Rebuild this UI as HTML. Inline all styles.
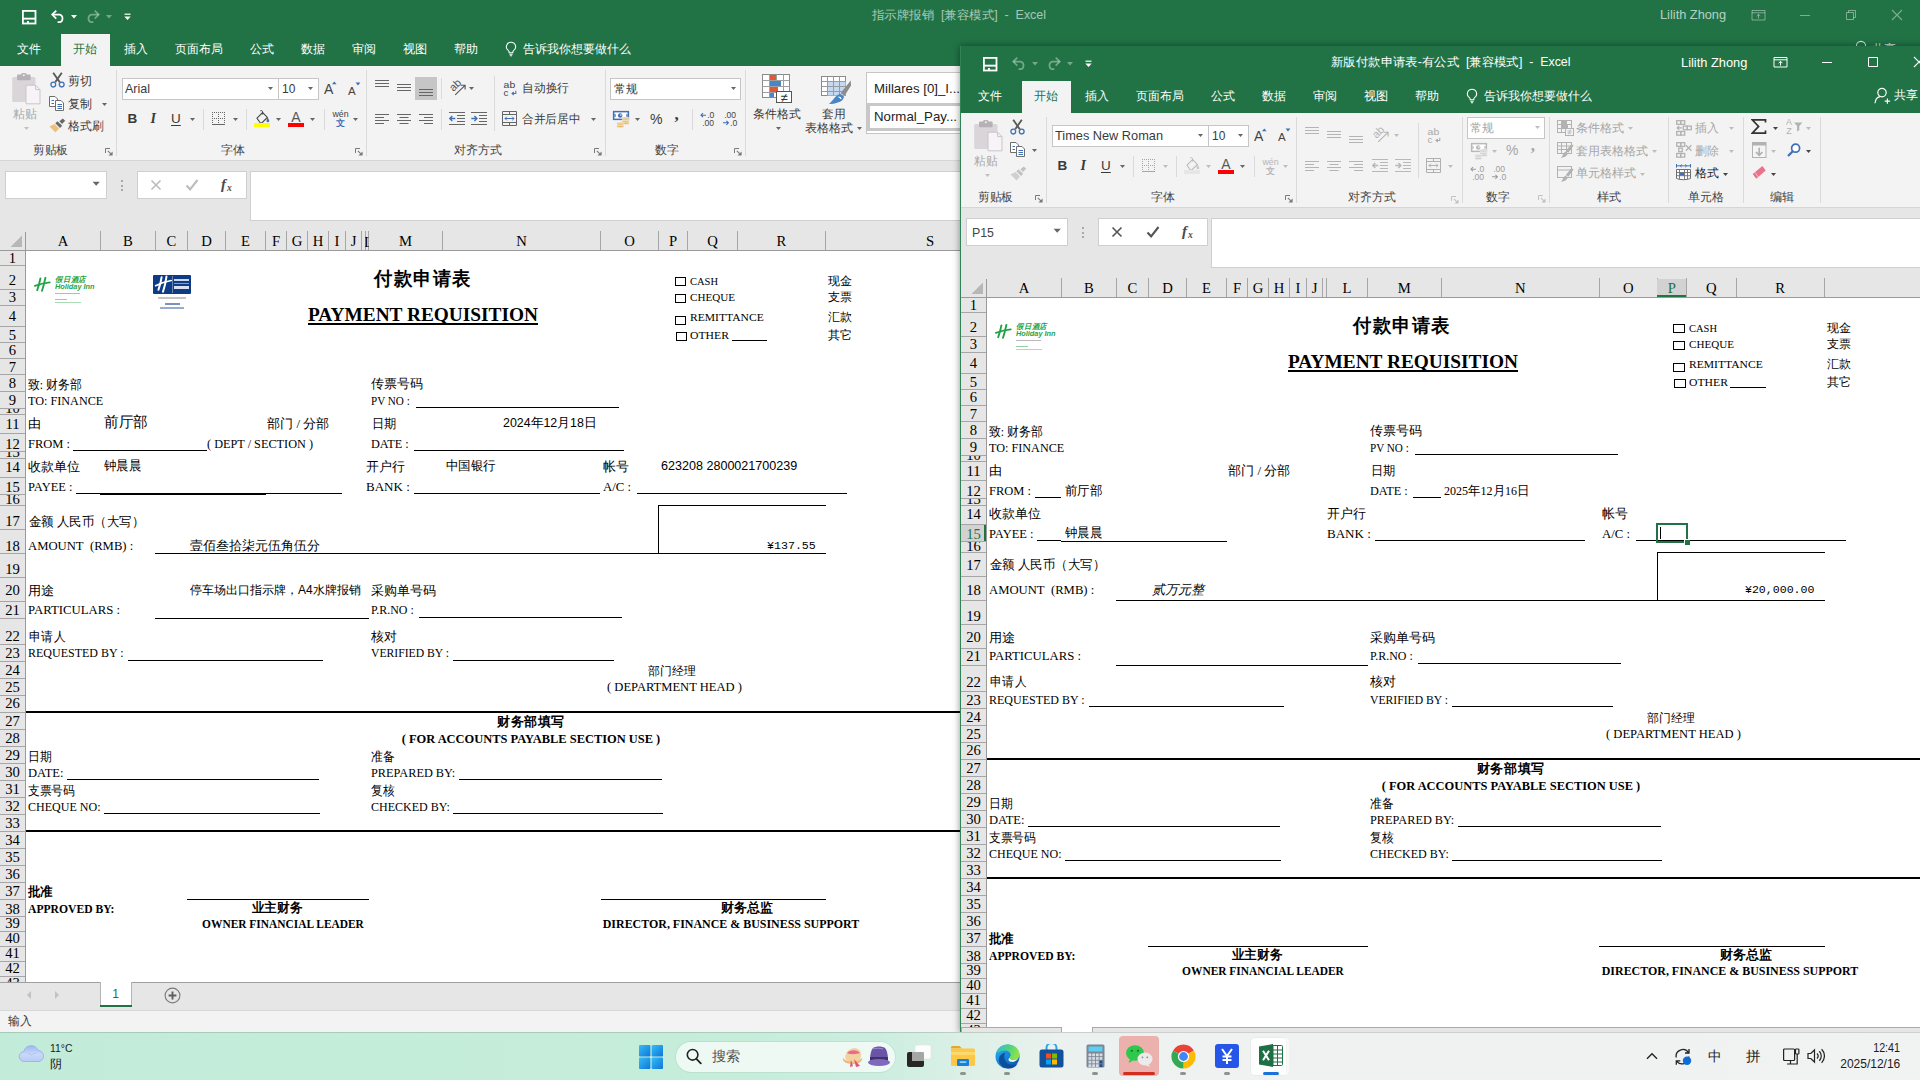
<!DOCTYPE html>
<html><head><meta charset="utf-8"><title>Excel</title><style>html,body{margin:0;padding:0}body{width:1920px;height:1080px;overflow:hidden;position:relative;background:#fff;font-family:"Liberation Sans",sans-serif}
#root{position:absolute;left:0;top:0;width:1920px;height:1080px;overflow:hidden}
#root div,#root span.t,#root svg{position:absolute}
#root .clip{overflow:hidden}
span.t{white-space:nowrap;display:block}
b.m{font-weight:inherit}
.fs{font-family:"Liberation Sans",sans-serif}.fr{font-family:"Liberation Serif",serif}.fm{font-family:"Liberation Mono",monospace}
</style></head><body><div id="root">
<div style="left:0px;top:0px;width:1920px;height:66px;background:#217346;"></div>
<svg style="left:22px;top:10px;" width="15" height="15" viewBox="0 0 15 15"><rect x="0.9" y="0.9" width="12.6" height="12.6" fill="none" stroke="#fff" stroke-width="1.8"/><rect x="1" y="7.7" width="12.4" height="1.9" fill="#fff"/><rect x="5" y="11" width="1.9" height="2" fill="#fff"/></svg>
<svg style="left:50px;top:9px;" width="16" height="14" viewBox="0 0 16 14"><g fill="none" stroke="#fff" stroke-width="1.7"><path d="M6.3 1.6L2.2 5.6l4.1 4"/><path d="M2.6 5.6h7.2a4 4 0 0 1 0 7.6H7.6"/></g></svg>
<svg style="left:71px;top:15px;" width="6" height="4" viewBox="0 0 6 4"><path d="M0 0h6L3 3.4z" fill="#fff"/></svg>
<svg style="left:85px;top:9px;" width="16" height="14" viewBox="0 0 16 14"><g fill="none" stroke="rgba(255,255,255,.38)" stroke-width="1.7"><path d="M9.7 1.6l4.1 4-4.1 4"/><path d="M13.4 5.6H6.2a4 4 0 0 0 0 7.6h2.2"/></g></svg>
<svg style="left:106px;top:15px;" width="6" height="4" viewBox="0 0 6 4"><path d="M0 0h6L3 3.4z" fill="rgba(255,255,255,.38)"/></svg>
<svg style="left:124px;top:13px;" width="7" height="8" viewBox="0 0 7 8"><path d="M0.5 1.2h6" stroke="#fff" stroke-width="1.2"/><path d="M0.3 3.6h6.4L3.5 7z" fill="#fff"/></svg>
<div style="left:61px;top:34px;width:49px;height:32px;background:#f3f3f3;"></div>
<span class="t fs" style="top:40.5px;height:16px;line-height:16px;font-size:12px;color:#217346;left:72.5px;transform-origin:0 50%;">开始</span>
<span class="t fs" style="top:40.5px;height:16px;line-height:16px;font-size:12px;color:#fff;left:17px;transform-origin:0 50%;">文件</span>
<span class="t fs" style="top:40.5px;height:16px;line-height:16px;font-size:12px;color:#fff;left:124px;transform-origin:0 50%;">插入</span>
<span class="t fs" style="top:40.5px;height:16px;line-height:16px;font-size:12px;color:#fff;left:175px;transform-origin:0 50%;transform:scaleX(0.9896);">页面布局</span>
<span class="t fs" style="top:40.5px;height:16px;line-height:16px;font-size:12px;color:#fff;left:250px;transform-origin:0 50%;">公式</span>
<span class="t fs" style="top:40.5px;height:16px;line-height:16px;font-size:12px;color:#fff;left:301px;transform-origin:0 50%;">数据</span>
<span class="t fs" style="top:40.5px;height:16px;line-height:16px;font-size:12px;color:#fff;left:352px;transform-origin:0 50%;">审阅</span>
<span class="t fs" style="top:40.5px;height:16px;line-height:16px;font-size:12px;color:#fff;left:402.5px;transform-origin:0 50%;transform:scaleX(1.0208);">视图</span>
<span class="t fs" style="top:40.5px;height:16px;line-height:16px;font-size:12px;color:#fff;left:454px;transform-origin:0 50%;">帮助</span>
<svg style="left:503px;top:40px;" width="16" height="18" viewBox="0 0 16 18"><g fill="none" stroke="#fff" stroke-width="1.1"><path d="M8 2.2a4.6 4.6 0 0 0-2.6 8.4c.5.4.8 1 .8 1.6v.6h3.6v-.6c0-.6.3-1.2.8-1.6A4.6 4.6 0 0 0 8 2.2z"/><path d="M6.4 14.3h3.2M6.9 15.8h2.2"/></g></svg>
<span class="t fs" style="top:40.5px;height:16px;line-height:16px;font-size:12px;color:#fff;left:523px;transform-origin:0 50%;transform:scaleX(0.9954);">告诉我你想要做什么</span>
<span class="t fs" style="top:6.5px;height:16px;line-height:16px;font-size:12px;color:rgba(255,255,255,.62);left:872px;transform-origin:0 50%;transform:scaleX(1.0356);">指示牌报销  [兼容模式]  -  Excel</span>
<span class="t fs" style="top:6.0px;height:17px;line-height:17px;font-size:13px;color:rgba(255,255,255,.68);left:1659.5px;transform-origin:0 50%;transform:scaleX(0.9834);">Lilith Zhong</span>
<svg style="left:1751px;top:9px;" width="15" height="12" viewBox="0 0 15 12"><g fill="none" stroke="rgba(255,255,255,.42)" stroke-width="1"><path d="M1 1.5h13v9.5H1zM1 3.8h13"/><path d="M7.5 9.6V5.4M5.6 7.2l1.9-1.9 1.9 1.9"/></g></svg>
<div style="left:1800px;top:15px;width:10px;height:1px;background:rgba(255,255,255,.42);"></div>
<svg style="left:1845px;top:9px;" width="12" height="12" viewBox="0 0 12 12"><g fill="none" stroke="rgba(255,255,255,.42)" stroke-width="1"><path d="M1.5 3.5h7v7h-7z"/><path d="M3.5 3.5v-2h7v7h-2"/></g></svg>
<svg style="left:1891px;top:9px;" width="12" height="12" viewBox="0 0 12 12"><path d="M1 1l10 10M11 1L1 11" stroke="rgba(255,255,255,.42)" stroke-width="1.1" fill="none"/></svg>
<svg style="left:1855px;top:40px;" width="12" height="12" viewBox="0 0 12 12"><circle cx="6" cy="6" r="4.6" fill="none" stroke="rgba(255,255,255,.8)" stroke-width="1.1"/></svg>
<span class="t fs" style="top:40.5px;height:16px;line-height:16px;font-size:12px;color:rgba(255,255,255,.85);left:1872px;transform-origin:0 50%;">共享</span>
<div style="left:0px;top:66px;width:1920px;height:95px;background:#f3f3f3;"></div>
<div style="left:0px;top:160px;width:1920px;height:1px;background:#d6d6d6;"></div>
<div style="left:0px;top:161px;width:1920px;height:71px;background:#e6e6e6;"></div>
<div style="left:5px;top:171px;width:102px;height:28px;background:#fff;box-sizing:border-box;border:1px solid #cfcfcf"></div>
<svg style="left:92px;top:181px;" width="9" height="6" viewBox="0 0 9 6"><path d="M0.6 0.8h7.2L4.2 4.8z" fill="#666"/></svg>
<div style="left:121px;top:180.0px;width:2px;height:2px;background:#a8a8a8;"></div>
<div style="left:121px;top:184.5px;width:2px;height:2px;background:#a8a8a8;"></div>
<div style="left:121px;top:189.0px;width:2px;height:2px;background:#a8a8a8;"></div>
<div style="left:137px;top:171px;width:110px;height:28px;background:#fff;box-sizing:border-box;border:1px solid #cfcfcf"></div>
<svg style="left:150px;top:179px;" width="12" height="12" viewBox="0 0 12 12"><path d="M1.5 1.5l9 9M10.5 1.5l-9 9" stroke="#bcbcbc" stroke-width="1.6" fill="none"/></svg>
<svg style="left:185px;top:178px;" width="14" height="13" viewBox="0 0 14 13"><path d="M1.5 7.5l3.6 3.8L12.5 2" stroke="#bcbcbc" stroke-width="2.1" fill="none"/></svg>
<span class="t fr" style="top:174.0px;height:20px;line-height:20px;font-size:15px;color:#4a4a4a;font-weight:700;font-style:italic;left:221px;transform-origin:0 50%;">f</span>
<span class="t fr" style="top:181.5px;height:12px;line-height:12px;font-size:9.5px;color:#4a4a4a;font-weight:700;font-style:italic;left:227px;transform-origin:0 50%;">x</span>
<div style="left:250px;top:171px;width:1700px;height:50px;background:#fff;box-sizing:border-box;border:1px solid #cfcfcf"></div>
<svg style="left:12px;top:73px;" width="30" height="32" viewBox="0 0 30 32"><rect x="0.2" y="4" width="23.3" height="25" rx="1.5" fill="#d9d5d9"/><rect x="5" y="1.4" width="13.6" height="5.8" rx="1" fill="#b6b1b6"/><rect x="9" y="0" width="5.6" height="3.4" rx="1.6" fill="#b6b1b6"/><circle cx="11.8" cy="2.2" r="1" fill="#f3f3f3"/><path d="M14 12.2h9.6l4.4 4.4v14.2H14z" fill="#f7f3f7" stroke="#cac5ca" stroke-width="1"/><path d="M23.6 12.2v4.4H28" fill="none" stroke="#cac5ca" stroke-width="1"/></svg>
<span class="t fs" style="top:105.7px;height:16px;line-height:16px;font-size:12px;color:#a8a8a8;left:13px;transform-origin:0 50%;">粘贴</span>
<svg style="left:23.5px;top:127.0px;" width="5" height="3" viewBox="0 0 5 3"><path d="M0 0h5L2.5 3z" fill="#c0c0c0"/></svg>
<svg style="left:50px;top:72px;" width="15" height="16" viewBox="0 0 15 16"><path d="M3.2 0.8l6.6 9.4M11.8 0.8L5.2 10.2" stroke="#5a5a5a" stroke-width="1.9" fill="none"/><circle cx="3.3" cy="12.6" r="2.4" fill="none" stroke="#3f6fb7" stroke-width="1.3"/><circle cx="11.7" cy="12.6" r="2.4" fill="none" stroke="#3f6fb7" stroke-width="1.3"/></svg>
<span class="t fs" style="top:72.7px;height:16px;line-height:16px;font-size:12px;color:#3a3a3a;left:68px;transform-origin:0 50%;">剪切</span>
<svg style="left:49px;top:96px;" width="16" height="15" viewBox="0 0 16 15"><path d="M0.5 0.5h5.5l2.5 2.5v7.5h-8z" fill="#fff" stroke="#6e6e6e" stroke-width="1"/><path d="M2.5 4.5h2.5M2.5 7.5h2.5" stroke="#3f6fb7" stroke-width="1"/><path d="M6.5 4.5h5.5l2.5 2.5v7.500h-8z" fill="#fff" stroke="#6e6e6e" stroke-width="1"/><path d="M8.5 8.500h4.5M8.5 10.500h4.5M8.5 12.500h4.5" stroke="#3f6fb7" stroke-width="1"/></svg>
<span class="t fs" style="top:95.7px;height:16px;line-height:16px;font-size:12px;color:#3a3a3a;left:68px;transform-origin:0 50%;">复制</span>
<svg style="left:102.0px;top:102.5px;" width="5" height="3" viewBox="0 0 5 3"><path d="M0 0h5L2.5 3z" fill="#666"/></svg>
<svg style="left:49px;top:118px;" width="17" height="15" viewBox="0 0 17 15"><path d="M0.5 8.5l5-2.5 4.5 4.5-3.5 4z" fill="#ecc07c"/><path d="M6.3 5.3l2.2-2.1 4.7 4.6-2.2 2.2z" fill="#686868"/><path d="M10.4 3.2l3.4-2.8 2.4 2.4-3.2 3.1z" fill="#686868"/></svg>
<span class="t fs" style="top:118.3px;height:16px;line-height:16px;font-size:12px;color:#3a3a3a;left:68px;transform-origin:0 50%;transform:scaleX(0.9861);">格式刷</span>
<span class="t fs" style="top:141.5px;height:16px;line-height:16px;font-size:12px;color:#444;left:32.5px;transform-origin:0 50%;transform:scaleX(0.9722);">剪贴板</span>
<svg style="left:105px;top:148px;" width="8" height="8" viewBox="0 0 8 8"><path d="M0.5 5V0.5H5" fill="none" stroke="#7a7a7a" stroke-width="1"/><path d="M2.8 2.8l3.4 3.4" fill="none" stroke="#7a7a7a" stroke-width="1.1"/><path d="M7.6 3.4v4.2H3.4z" fill="#7a7a7a"/></svg>
<div style="left:116px;top:70px;width:1px;height:86px;background:#dadada;"></div>
<div style="left:121.5px;top:77.5px;width:197.0px;height:22.0px;background:#fff;box-sizing:border-box;border:1px solid #c6c6c6"></div>
<div style="left:277.5px;top:77.5px;width:1px;height:22.0px;background:#c6c6c6;"></div>
<span class="t fs" style="top:80.2px;height:17px;line-height:17px;font-size:13px;color:#3a3a3a;left:124.5px;transform-origin:0 50%;transform:scaleX(0.9610);">Arial</span>
<svg style="left:267.5px;top:87.0px;" width="5" height="3" viewBox="0 0 5 3"><path d="M0 0h5L2.5 3z" fill="#666"/></svg>
<span class="t fs" style="top:80.2px;height:17px;line-height:17px;font-size:13px;color:#3a3a3a;left:282px;transform-origin:0 50%;transform:scaleX(0.9192);">10</span>
<svg style="left:307.8px;top:87.0px;" width="5" height="3" viewBox="0 0 5 3"><path d="M0 0h5L2.5 3z" fill="#666"/></svg>
<svg style="left:324px;top:81px;" width="13" height="14" viewBox="0 0 13 14"><text x="0" y="13" font-size="14" fill="#444" font-family="Liberation Sans">A</text><path d="M8 3.3L10.3 0.4 12.6 3.3z" fill="#3f6fb7"/></svg>
<svg style="left:348px;top:82px;" width="13" height="14" viewBox="0 0 13 14"><text x="0" y="13" font-size="11.5" fill="#444" font-family="Liberation Sans">A</text><path d="M7.6 0.6h4.8L10 3.6z" fill="#3f6fb7"/></svg>
<div style="left:366px;top:70px;width:1px;height:86px;background:#dadada;"></div>
<span class="t fs" style="top:109.7px;height:18px;line-height:18px;font-size:13.5px;color:#3a3a3a;font-weight:700;left:127.5px;transform-origin:0 50%;">B</span>
<span class="t fr" style="top:109.7px;height:18px;line-height:18px;font-size:14px;color:#3a3a3a;font-weight:700;font-style:italic;left:150.5px;transform-origin:0 50%;">I</span>
<span class="t fs" style="top:109.5px;height:18px;line-height:18px;font-size:13.5px;color:#3a3a3a;left:171px;transform-origin:0 50%;text-decoration:underline;text-underline-offset:2px">U</span>
<svg style="left:189.8px;top:118.0px;" width="5" height="3" viewBox="0 0 5 3"><path d="M0 0h5L2.5 3z" fill="#666"/></svg>
<div style="left:203px;top:109px;width:1px;height:21px;background:#dadada;"></div>
<svg style="left:212px;top:112px;" width="13" height="13" viewBox="0 0 13 13"><path d="M0 0.5h13" stroke="#666" stroke-width="1" stroke-dasharray="1 1"/><path d="M0 6.5h13" stroke="#666" stroke-width="1" stroke-dasharray="1 1"/><path d="M0.5 0v12" stroke="#666" stroke-width="1" stroke-dasharray="1 1"/><path d="M6.5 0v12" stroke="#666" stroke-width="1" stroke-dasharray="1 1"/><path d="M12.5 0v12" stroke="#666" stroke-width="1" stroke-dasharray="1 1"/><rect x="0" y="12" width="13" height="1" fill="#666"/></svg>
<svg style="left:232.8px;top:118.0px;" width="5" height="3" viewBox="0 0 5 3"><path d="M0 0h5L2.5 3z" fill="#666"/></svg>
<div style="left:246px;top:109px;width:1px;height:21px;background:#dadada;"></div>
<svg style="left:254px;top:110px;" width="17" height="17" viewBox="0 0 17 17"><path d="M3 8.2l5.6-5.6 4.8 4.8-5.6 5.6H6.4z" fill="none" stroke="#444" stroke-width="1.1"/><path d="M6.3 0.9c1-.8 2.3-.2 2.3 1v2.6" fill="none" stroke="#444" stroke-width="1"/><path d="M13.6 7.4c1 1.6 1.7 2.6 1.7 3.5a1.4 1.4 0 0 1-2.8 0c0-.9.4-1.9 1.1-3.5z" fill="#3f6fb7"/><rect x="0" y="13" width="16" height="4" fill="#ffff00"/></svg>
<svg style="left:275.8px;top:118.0px;" width="5" height="3" viewBox="0 0 5 3"><path d="M0 0h5L2.5 3z" fill="#666"/></svg>
<svg style="left:288px;top:110px;" width="16" height="17" viewBox="0 0 16 17"><text x="8" y="12.2" text-anchor="middle" font-size="14" fill="#595959" font-family="Liberation Sans">A</text><rect x="0" y="13" width="16" height="4" fill="#ff0000"/></svg>
<svg style="left:309.8px;top:118.0px;" width="5" height="3" viewBox="0 0 5 3"><path d="M0 0h5L2.5 3z" fill="#666"/></svg>
<div style="left:324px;top:109px;width:1px;height:21px;background:#dadada;"></div>
<svg style="left:332px;top:110px;" width="17" height="17" viewBox="0 0 17 17"><text x="8.5" y="7" text-anchor="middle" font-size="8.8" fill="#444" font-family="Liberation Sans">wén</text><text x="8.5" y="16.2" text-anchor="middle" font-size="8.6" font-weight="700" fill="#3f6fb7" font-family="Liberation Sans">文</text></svg>
<svg style="left:353.0px;top:118.0px;" width="5" height="3" viewBox="0 0 5 3"><path d="M0 0h5L2.5 3z" fill="#666"/></svg>
<span class="t fs" style="top:141.5px;height:16px;line-height:16px;font-size:12px;color:#444;left:221px;transform-origin:0 50%;">字体</span>
<svg style="left:355px;top:148px;" width="8" height="8" viewBox="0 0 8 8"><path d="M0.5 5V0.5H5" fill="none" stroke="#7a7a7a" stroke-width="1"/><path d="M2.8 2.8l3.4 3.4" fill="none" stroke="#7a7a7a" stroke-width="1.1"/><path d="M7.6 3.4v4.2H3.4z" fill="#7a7a7a"/></svg>
<div style="left:415px;top:77px;width:22px;height:23px;background:#c6c6c6;"></div>
<svg style="left:375px;top:79px;" width="14" height="10" viewBox="0 0 14 10"><rect x="0" y="1" width="14" height="1" fill="#666"/><rect x="0" y="4" width="14" height="1" fill="#666"/><rect x="0" y="7" width="14" height="1" fill="#666"/></svg>
<svg style="left:397px;top:83px;" width="14" height="10" viewBox="0 0 14 10"><rect x="0" y="1" width="14" height="1" fill="#666"/><rect x="0" y="4" width="14" height="1" fill="#666"/><rect x="0" y="7" width="14" height="1" fill="#666"/></svg>
<svg style="left:419px;top:88px;" width="14" height="10" viewBox="0 0 14 10"><rect x="0" y="1" width="14" height="1" fill="#666"/><rect x="0" y="4" width="14" height="1" fill="#666"/><rect x="0" y="7" width="14" height="1" fill="#666"/></svg>
<svg style="left:375px;top:114px;" width="14" height="12" viewBox="0 0 14 12"><rect x="0" y="0" width="14" height="1" fill="#666"/><rect x="0" y="3" width="9" height="1" fill="#666"/><rect x="0" y="6" width="14" height="1" fill="#666"/><rect x="0" y="9" width="9" height="1" fill="#666"/></svg>
<svg style="left:397px;top:114px;" width="14" height="12" viewBox="0 0 14 12"><rect x="0.0" y="0" width="14" height="1" fill="#666"/><rect x="2.5" y="3" width="9" height="1" fill="#666"/><rect x="0.0" y="6" width="14" height="1" fill="#666"/><rect x="2.5" y="9" width="9" height="1" fill="#666"/></svg>
<svg style="left:419px;top:114px;" width="14" height="12" viewBox="0 0 14 12"><rect x="0" y="0" width="14" height="1" fill="#666"/><rect x="5" y="3" width="9" height="1" fill="#666"/><rect x="0" y="6" width="14" height="1" fill="#666"/><rect x="5" y="9" width="9" height="1" fill="#666"/></svg>
<div style="left:441px;top:78px;width:1px;height:21px;background:#dadada;"></div>
<svg style="left:449px;top:80px;" width="18" height="16" viewBox="0 0 18 16"><text transform="translate(4.400,12) rotate(-45)" font-size="11" fill="#555" font-family="Liberation Sans">ab</text><path d="M6.200 14.800L15.800 5.600M11.800 5.300H16.100V9.600" fill="none" stroke="#555" stroke-width="1.100"/></svg>
<svg style="left:468.8px;top:87.0px;" width="5" height="3" viewBox="0 0 5 3"><path d="M0 0h5L2.5 3z" fill="#666"/></svg>
<div style="left:441px;top:109px;width:1px;height:21px;background:#dadada;"></div>
<svg style="left:449px;top:112px;" width="16" height="13" viewBox="0 0 16 13"><rect x="0" y="0" width="16" height="1" fill="#666"/><rect x="0" y="12" width="16" height="1" fill="#666"/><rect x="8" y="3" width="8" height="1" fill="#666"/><rect x="8" y="6" width="8" height="1" fill="#666"/><rect x="8" y="9" width="8" height="1" fill="#666"/><path d="M6.300 6.500H1M3.300 4L0.800 6.500 3.300 9" fill="none" stroke="#3f6fb7" stroke-width="1.400"/></svg>
<svg style="left:471px;top:112px;" width="16" height="13" viewBox="0 0 16 13"><rect x="0" y="0" width="16" height="1" fill="#666"/><rect x="0" y="12" width="16" height="1" fill="#666"/><rect x="8" y="3" width="8" height="1" fill="#666"/><rect x="8" y="6" width="8" height="1" fill="#666"/><rect x="8" y="9" width="8" height="1" fill="#666"/><path d="M0.300 6.500h5.400M3.400 4l2.500 2.500L3.400 9" fill="none" stroke="#3f6fb7" stroke-width="1.400"/></svg>
<div style="left:494px;top:76px;width:1px;height:55px;background:#dadada;"></div>
<svg style="left:503px;top:81px;" width="14" height="16" viewBox="0 0 14 16"><text x="0.600" y="7.300" font-size="9.800" textLength="11.600" lengthAdjust="spacingAndGlyphs" fill="#444" font-family="Liberation Sans">ab</text><text x="0.600" y="14.900" font-size="9.800" fill="#444" font-family="Liberation Sans">c</text><path d="M12.800 9.800v2.700H9.200M10.800 10.800L9 12.500l1.800 1.700" fill="none" stroke="#3f6fb7" stroke-width="1.050"/></svg>
<span class="t fs" style="top:80.4px;height:16px;line-height:16px;font-size:12px;color:#3a3a3a;left:521.7px;transform-origin:0 50%;transform:scaleX(0.9792);">自动换行</span>
<svg style="left:502px;top:111px;" width="16" height="16" viewBox="0 0 16 16"><path d="M0.500 0.500h14v14h-14zM0.500 3.500h14M0.500 11.500h14M7.500 0.500v3M7.500 11.500v3" fill="none" stroke="#666" stroke-width="1"/><path d="M3 7.500h9M4.800 5.700L3 7.500l1.800 1.800M10.200 5.700L12 7.500l-1.800 1.800" fill="none" stroke="#3f6fb7" stroke-width="1"/></svg>
<span class="t fs" style="top:111.0px;height:16px;line-height:16px;font-size:12px;color:#3a3a3a;left:521.7px;transform-origin:0 50%;transform:scaleX(0.9717);">合并后居中</span>
<svg style="left:590.8px;top:118.0px;" width="5" height="3" viewBox="0 0 5 3"><path d="M0 0h5L2.5 3z" fill="#666"/></svg>
<span class="t fs" style="top:141.7px;height:16px;line-height:16px;font-size:12px;color:#444;left:454px;transform-origin:0 50%;transform:scaleX(0.9938);">对齐方式</span>
<svg style="left:594px;top:148px;" width="8" height="8" viewBox="0 0 8 8"><path d="M0.5 5V0.5H5" fill="none" stroke="#7a7a7a" stroke-width="1"/><path d="M2.8 2.8l3.4 3.4" fill="none" stroke="#7a7a7a" stroke-width="1.1"/><path d="M7.6 3.4v4.2H3.4z" fill="#7a7a7a"/></svg>
<div style="left:605px;top:70px;width:1px;height:86px;background:#dadada;"></div>
<div style="left:610px;top:77.5px;width:131px;height:22.0px;background:#fff;box-sizing:border-box;border:1px solid #c6c6c6"></div>
<span class="t fs" style="top:80.7px;height:16px;line-height:16px;font-size:12px;color:#3a3a3a;left:613.7px;transform-origin:0 50%;transform:scaleX(0.9708);">常规</span>
<svg style="left:730.8px;top:87.0px;" width="5" height="3" viewBox="0 0 5 3"><path d="M0 0h5L2.5 3z" fill="#666"/></svg>
<svg style="left:612px;top:110px;" width="18" height="18" viewBox="0 0 18 18"><rect x="0.900" y="0.900" width="16.200" height="9.200" fill="#3f6fb7"/><rect x="2.400" y="2.400" width="13.200" height="6.200" fill="#fff"/><rect x="2.400" y="4.200" width="1.300" height="2.600" fill="#3f6fb7"/><rect x="14.300" y="4.200" width="1.300" height="2.600" fill="#3f6fb7"/><circle cx="8.200" cy="5.500" r="2.200" fill="#3f6fb7"/><circle cx="8.900" cy="5.100" r=".8" fill="#fff"/><ellipse cx="13.600" cy="8.3" rx="3.700" ry="1.250" fill="#e8b96a" stroke="#f3f3f3" stroke-width=".6"/><ellipse cx="13.600" cy="10" rx="3.700" ry="1.250" fill="#e8b96a" stroke="#f3f3f3" stroke-width=".6"/><ellipse cx="13.600" cy="11.7" rx="3.700" ry="1.250" fill="#e8b96a" stroke="#f3f3f3" stroke-width=".6"/><ellipse cx="13.600" cy="13.3" rx="3.700" ry="1.250" fill="#e8b96a" stroke="#f3f3f3" stroke-width=".6"/><ellipse cx="8.300" cy="13.4" rx="3.500" ry="1.200" fill="#e8b96a" stroke="#f3f3f3" stroke-width=".6"/><ellipse cx="8.300" cy="15" rx="3.500" ry="1.200" fill="#e8b96a" stroke="#f3f3f3" stroke-width=".6"/><ellipse cx="8.300" cy="16.5" rx="3.500" ry="1.200" fill="#e8b96a" stroke="#f3f3f3" stroke-width=".6"/></svg>
<svg style="left:635.0px;top:118.0px;" width="5" height="3" viewBox="0 0 5 3"><path d="M0 0h5L2.5 3z" fill="#666"/></svg>
<span class="t fs" style="top:109.8px;height:19px;line-height:19px;font-size:14.5px;color:#3a3a3a;left:649.5px;transform-origin:0 50%;transform:scaleX(0.9685);">%</span>
<span class="t fr" style="top:103.5px;height:22px;line-height:22px;font-size:17px;color:#3a3a3a;font-weight:700;left:674.5px;transform-origin:0 50%;">,</span>
<div style="left:692px;top:109px;width:1px;height:21px;background:#dadada;"></div>
<svg style="left:700px;top:112px;" width="16" height="14" viewBox="0 0 16 14"><path d="M1 3.2h5M3 1.2l-2 2 2 2" fill="none" stroke="#3f6fb7" stroke-width="1.1"/><text x="7.2" y="6.2" font-size="8.600" fill="#444" font-family="Liberation Sans">.0</text><text x="2.2" y="13.6" font-size="8.600" fill="#444" font-family="Liberation Sans">.00</text></svg>
<svg style="left:722px;top:112px;" width="16" height="14" viewBox="0 0 16 14"><text x="2.2" y="6.2" font-size="8.600" fill="#444" font-family="Liberation Sans">.00</text><path d="M1 10.8h5.5M4.4 8.8l2 2-2 2" fill="none" stroke="#3f6fb7" stroke-width="1.1"/><text x="8" y="13.6" font-size="8.600" fill="#444" font-family="Liberation Sans">.0</text></svg>
<span class="t fs" style="top:141.5px;height:16px;line-height:16px;font-size:12px;color:#444;left:655px;transform-origin:0 50%;transform:scaleX(0.9875);">数字</span>
<svg style="left:734px;top:148px;" width="8" height="8" viewBox="0 0 8 8"><path d="M0.5 5V0.5H5" fill="none" stroke="#7a7a7a" stroke-width="1"/><path d="M2.8 2.8l3.4 3.4" fill="none" stroke="#7a7a7a" stroke-width="1.1"/><path d="M7.6 3.4v4.2H3.4z" fill="#7a7a7a"/></svg>
<div style="left:745px;top:70px;width:1px;height:86px;background:#dadada;"></div>
<svg style="left:762px;top:74px;" width="30" height="29" viewBox="0 0 30 29"><rect x="0.5" y="0.5" width="27" height="23" fill="#fff" stroke="#8a8a8a"/><path d="M7.5 0.5v23" stroke="#a0a0a0" stroke-width="1"/><path d="M14.5 0.5v23" stroke="#a0a0a0" stroke-width="1"/><path d="M21.5 0.5v23" stroke="#a0a0a0" stroke-width="1"/><path d="M0.5 6.5h27" stroke="#a0a0a0" stroke-width="1"/><path d="M0.5 12.5h27" stroke="#a0a0a0" stroke-width="1"/><path d="M0.5 18.5h27" stroke="#a0a0a0" stroke-width="1"/><rect x="8" y="1" width="6" height="5" fill="#e0573a"/><rect x="8" y="7" width="11" height="5" fill="#4a86c6"/><rect x="8" y="13" width="8" height="5" fill="#e0573a"/><rect x="8" y="19" width="4" height="4" fill="#4a86c6"/><rect x="14.5" y="17.5" width="15" height="11" fill="#fff" stroke="#555"/><text x="22" y="27.500" text-anchor="middle" font-size="13" fill="#333" font-family="Liberation Sans">≠</text></svg>
<span class="t fs" style="top:105.7px;height:16px;line-height:16px;font-size:12px;color:#3a3a3a;left:752.5px;transform-origin:0 50%;transform:scaleX(0.9896);">条件格式</span>
<svg style="left:775.8px;top:127.0px;" width="5" height="3" viewBox="0 0 5 3"><path d="M0 0h5L2.5 3z" fill="#666"/></svg>
<svg style="left:821px;top:76px;" width="30" height="28" viewBox="0 0 30 28"><rect x="0.5" y="0.5" width="24" height="19" fill="#fff" stroke="#8a8a8a"/><rect x="6.5" y="5.5" width="18" height="14" fill="#c5d9f1"/><path d="M6.5 0.5v19" stroke="#9a9a9a" stroke-width="1"/><path d="M12.5 0.5v19" stroke="#9a9a9a" stroke-width="1"/><path d="M18.5 0.5v19" stroke="#9a9a9a" stroke-width="1"/><path d="M0.5 5.5h24" stroke="#9a9a9a" stroke-width="1"/><path d="M0.5 10.5h24" stroke="#9a9a9a" stroke-width="1"/><path d="M0.5 15.5h24" stroke="#9a9a9a" stroke-width="1"/><path d="M29.8 4.600L30 9.500 23.600 19.800 19.600 17z" fill="#8c8c8c"/><path d="M19 17.700l4 2.800c-.4 4.200-4.800 7.200-15.400 7.600 4.300-2.800 5.600-8 11.400-10.400z" fill="#4a86c6"/><path d="M17.500 21.200c1.200-.2 2.300.6 2.500 1.800" stroke="#fff" stroke-width="1.300" fill="none"/></svg>
<span class="t fs" style="top:105.7px;height:16px;line-height:16px;font-size:12px;color:#3a3a3a;left:822px;transform-origin:0 50%;transform:scaleX(0.9792);">套用</span>
<span class="t fs" style="top:120.3px;height:16px;line-height:16px;font-size:12px;color:#3a3a3a;left:805px;transform-origin:0 50%;">表格格式</span>
<svg style="left:857.0px;top:127.0px;" width="5" height="3" viewBox="0 0 5 3"><path d="M0 0h5L2.5 3z" fill="#666"/></svg>
<div style="left:866px;top:72px;width:200px;height:62px;background:#fff;box-sizing:border-box;border:1px solid #c6c6c6"></div>
<div style="left:867px;top:103px;width:198px;height:28px;background:#fff;box-sizing:border-box;border:3px solid #c8c8c8"></div>
<span class="t fs" style="top:79.5px;height:17px;line-height:17px;font-size:13px;color:#222;left:874px;transform-origin:0 50%;transform:scaleX(1.0174);">Millares [0]_I...</span>
<span class="t fs" style="top:108.2px;height:17px;line-height:17px;font-size:13px;color:#222;left:874px;transform-origin:0 50%;transform:scaleX(1.0196);">Normal_Pay...</span>
<div style="left:0px;top:232px;width:1920px;height:750px;background:#fff;"></div>
<div style="left:0px;top:232px;width:1920px;height:18px;background:#e6e6e6;"></div>
<div style="left:0px;top:232px;width:25px;height:750px;background:#e6e6e6;"></div>
<svg style="left:9px;top:234px;" width="14" height="14" viewBox="0 0 14 14"><path d="M13 1.5V13H1.5z" fill="#b7b7b7"/></svg>
<div style="left:100px;top:231px;width:1px;height:19px;background:#a6a6a6;"></div>
<span class="t fr" style="top:231.8px;height:18px;line-height:18px;font-size:14.67px;color:#000;left:-237.0px;width:600px;text-align:center;transform-origin:50% 50%;">A</span>
<div style="left:155px;top:231px;width:1px;height:19px;background:#a6a6a6;"></div>
<span class="t fr" style="top:231.8px;height:18px;line-height:18px;font-size:14.67px;color:#000;left:-172.0px;width:600px;text-align:center;transform-origin:50% 50%;">B</span>
<div style="left:187px;top:231px;width:1px;height:19px;background:#a6a6a6;"></div>
<span class="t fr" style="top:231.8px;height:18px;line-height:18px;font-size:14.67px;color:#000;left:-128.5px;width:600px;text-align:center;transform-origin:50% 50%;">C</span>
<div style="left:225px;top:231px;width:1px;height:19px;background:#a6a6a6;"></div>
<span class="t fr" style="top:231.8px;height:18px;line-height:18px;font-size:14.67px;color:#000;left:-93.5px;width:600px;text-align:center;transform-origin:50% 50%;">D</span>
<div style="left:265px;top:231px;width:1px;height:19px;background:#a6a6a6;"></div>
<span class="t fr" style="top:231.8px;height:18px;line-height:18px;font-size:14.67px;color:#000;left:-54.5px;width:600px;text-align:center;transform-origin:50% 50%;">E</span>
<div style="left:286px;top:231px;width:1px;height:19px;background:#a6a6a6;"></div>
<span class="t fr" style="top:231.8px;height:18px;line-height:18px;font-size:14.67px;color:#000;left:-24.0px;width:600px;text-align:center;transform-origin:50% 50%;">F</span>
<div style="left:307px;top:231px;width:1px;height:19px;background:#a6a6a6;"></div>
<span class="t fr" style="top:231.8px;height:18px;line-height:18px;font-size:14.67px;color:#000;left:-3.0px;width:600px;text-align:center;transform-origin:50% 50%;">G</span>
<div style="left:328px;top:231px;width:1px;height:19px;background:#a6a6a6;"></div>
<span class="t fr" style="top:231.8px;height:18px;line-height:18px;font-size:14.67px;color:#000;left:18.0px;width:600px;text-align:center;transform-origin:50% 50%;">H</span>
<div style="left:345px;top:231px;width:1px;height:19px;background:#a6a6a6;"></div>
<span class="t fr" style="top:231.8px;height:18px;line-height:18px;font-size:14.67px;color:#000;left:37.0px;width:600px;text-align:center;transform-origin:50% 50%;">I</span>
<div style="left:361px;top:231px;width:1px;height:19px;background:#a6a6a6;"></div>
<span class="t fr" style="top:231.8px;height:18px;line-height:18px;font-size:14.67px;color:#000;left:53.5px;width:600px;text-align:center;transform-origin:50% 50%;">J</span>
<div style="left:365px;top:231px;width:1px;height:19px;background:#a6a6a6;"></div>
<div style="left:368px;top:231px;width:1px;height:19px;background:#a6a6a6;"></div>
<div style="left:442px;top:231px;width:1px;height:19px;background:#a6a6a6;"></div>
<span class="t fr" style="top:231.8px;height:18px;line-height:18px;font-size:14.67px;color:#000;left:105.5px;width:600px;text-align:center;transform-origin:50% 50%;">M</span>
<div style="left:600px;top:231px;width:1px;height:19px;background:#a6a6a6;"></div>
<span class="t fr" style="top:231.8px;height:18px;line-height:18px;font-size:14.67px;color:#000;left:221.5px;width:600px;text-align:center;transform-origin:50% 50%;">N</span>
<div style="left:658px;top:231px;width:1px;height:19px;background:#a6a6a6;"></div>
<span class="t fr" style="top:231.8px;height:18px;line-height:18px;font-size:14.67px;color:#000;left:329.5px;width:600px;text-align:center;transform-origin:50% 50%;">O</span>
<div style="left:687px;top:231px;width:1px;height:19px;background:#a6a6a6;"></div>
<span class="t fr" style="top:231.8px;height:18px;line-height:18px;font-size:14.67px;color:#000;left:373.0px;width:600px;text-align:center;transform-origin:50% 50%;">P</span>
<div style="left:737px;top:231px;width:1px;height:19px;background:#a6a6a6;"></div>
<span class="t fr" style="top:231.8px;height:18px;line-height:18px;font-size:14.67px;color:#000;left:412.5px;width:600px;text-align:center;transform-origin:50% 50%;">Q</span>
<div style="left:825px;top:231px;width:1px;height:19px;background:#a6a6a6;"></div>
<span class="t fr" style="top:231.8px;height:18px;line-height:18px;font-size:14.67px;color:#000;left:481.5px;width:600px;text-align:center;transform-origin:50% 50%;">R</span>
<div style="left:1040px;top:231px;width:1px;height:19px;background:#a6a6a6;"></div>
<span class="t fr" style="top:231.8px;height:18px;line-height:18px;font-size:14.67px;color:#000;left:630px;width:600px;text-align:center;transform-origin:50% 50%;">S</span>
<div class="clip" style="left:365px;top:233px;width:4px;height:16px;">
<span class="t fr" style="top:-0.5px;height:18px;line-height:18px;font-size:14.67px;color:#000;left:-1px;transform-origin:0 50%;">L</span>
</div>
<div style="left:0px;top:250px;width:1920px;height:1px;background:#9a9a9a;"></div>
<div style="left:25px;top:232px;width:1px;height:750px;background:#9a9a9a;"></div>
<div style="left:0px;top:265px;width:25px;height:1px;background:#a6a6a6;"></div>
<div class="clip" style="left:0px;top:251px;width:25px;height:14px;">
<span class="t fr" style="top:-2.1px;height:18px;line-height:18px;font-size:14.67px;color:#000;left:-287.5px;width:600px;text-align:center;transform-origin:50% 50%;">1</span>
</div>
<div style="left:0px;top:289px;width:25px;height:1px;background:#a6a6a6;"></div>
<div class="clip" style="left:0px;top:266px;width:25px;height:23px;">
<span class="t fr" style="top:5.4px;height:18px;line-height:18px;font-size:14.67px;color:#000;left:-287.5px;width:600px;text-align:center;transform-origin:50% 50%;">2</span>
</div>
<div style="left:0px;top:305px;width:25px;height:1px;background:#a6a6a6;"></div>
<div class="clip" style="left:0px;top:290px;width:25px;height:15px;">
<span class="t fr" style="top:-2.35px;height:18px;line-height:18px;font-size:14.67px;color:#000;left:-287.5px;width:600px;text-align:center;transform-origin:50% 50%;">3</span>
</div>
<div style="left:0px;top:326px;width:25px;height:1px;background:#a6a6a6;"></div>
<div class="clip" style="left:0px;top:306px;width:25px;height:20px;">
<span class="t fr" style="top:0.9px;height:18px;line-height:18px;font-size:14.67px;color:#000;left:-287.5px;width:600px;text-align:center;transform-origin:50% 50%;">4</span>
</div>
<div style="left:0px;top:342px;width:25px;height:1px;background:#a6a6a6;"></div>
<div class="clip" style="left:0px;top:327px;width:25px;height:15px;">
<span class="t fr" style="top:-1.35px;height:18px;line-height:18px;font-size:14.67px;color:#000;left:-287.5px;width:600px;text-align:center;transform-origin:50% 50%;">5</span>
</div>
<div style="left:0px;top:358px;width:25px;height:1px;background:#a6a6a6;"></div>
<div class="clip" style="left:0px;top:343px;width:25px;height:15px;">
<span class="t fr" style="top:-1.6px;height:18px;line-height:18px;font-size:14.67px;color:#000;left:-287.5px;width:600px;text-align:center;transform-origin:50% 50%;">6</span>
</div>
<div style="left:0px;top:374px;width:25px;height:1px;background:#a6a6a6;"></div>
<div class="clip" style="left:0px;top:359px;width:25px;height:15px;">
<span class="t fr" style="top:-1.35px;height:18px;line-height:18px;font-size:14.67px;color:#000;left:-287.5px;width:600px;text-align:center;transform-origin:50% 50%;">7</span>
</div>
<div style="left:0px;top:391px;width:25px;height:1px;background:#a6a6a6;"></div>
<div class="clip" style="left:0px;top:375px;width:25px;height:16px;">
<span class="t fr" style="top:-0.6px;height:18px;line-height:18px;font-size:14.67px;color:#000;left:-287.5px;width:600px;text-align:center;transform-origin:50% 50%;">8</span>
</div>
<div style="left:0px;top:408px;width:25px;height:1px;background:#a6a6a6;"></div>
<div class="clip" style="left:0px;top:392px;width:25px;height:16px;">
<span class="t fr" style="top:-0.6px;height:18px;line-height:18px;font-size:14.67px;color:#000;left:-287.5px;width:600px;text-align:center;transform-origin:50% 50%;">9</span>
</div>
<div style="left:0px;top:414px;width:25px;height:1px;background:#a6a6a6;"></div>
<div class="clip" style="left:0px;top:409px;width:25px;height:5px;">
<span class="t fr" style="top:-10.3px;height:18px;line-height:18px;font-size:14.67px;color:#000;left:-287.5px;width:600px;text-align:center;transform-origin:50% 50%;">10</span>
</div>
<div style="left:0px;top:433px;width:25px;height:1px;background:#a6a6a6;"></div>
<div class="clip" style="left:0px;top:415px;width:25px;height:18px;">
<span class="t fr" style="top:-0.35px;height:18px;line-height:18px;font-size:14.67px;color:#000;left:-287.5px;width:600px;text-align:center;transform-origin:50% 50%;">11</span>
</div>
<div style="left:0px;top:451px;width:25px;height:1px;background:#a6a6a6;"></div>
<div class="clip" style="left:0px;top:434px;width:25px;height:17px;">
<span class="t fr" style="top:0.65px;height:18px;line-height:18px;font-size:14.67px;color:#000;left:-287.5px;width:600px;text-align:center;transform-origin:50% 50%;">12</span>
</div>
<div style="left:0px;top:458px;width:25px;height:1px;background:#a6a6a6;"></div>
<div class="clip" style="left:0px;top:452px;width:25px;height:6px;">
<span class="t fr" style="top:-9.3px;height:18px;line-height:18px;font-size:14.67px;color:#000;left:-287.5px;width:600px;text-align:center;transform-origin:50% 50%;">13</span>
</div>
<div style="left:0px;top:477px;width:25px;height:1px;background:#a6a6a6;"></div>
<div class="clip" style="left:0px;top:459px;width:25px;height:18px;">
<span class="t fr" style="top:-1.35px;height:18px;line-height:18px;font-size:14.67px;color:#000;left:-287.5px;width:600px;text-align:center;transform-origin:50% 50%;">14</span>
</div>
<div style="left:0px;top:494px;width:25px;height:1px;background:#a6a6a6;"></div>
<div class="clip" style="left:0px;top:478px;width:25px;height:16px;">
<span class="t fr" style="top:-0.35px;height:18px;line-height:18px;font-size:14.67px;color:#000;left:-287.5px;width:600px;text-align:center;transform-origin:50% 50%;">15</span>
</div>
<div style="left:0px;top:505px;width:25px;height:1px;background:#a6a6a6;"></div>
<div class="clip" style="left:0px;top:495px;width:25px;height:10px;">
<span class="t fr" style="top:-5.3px;height:18px;line-height:18px;font-size:14.67px;color:#000;left:-287.5px;width:600px;text-align:center;transform-origin:50% 50%;">16</span>
</div>
<div style="left:0px;top:529px;width:25px;height:1px;background:#a6a6a6;"></div>
<div class="clip" style="left:0px;top:506px;width:25px;height:23px;">
<span class="t fr" style="top:6.3px;height:18px;line-height:18px;font-size:14.67px;color:#000;left:-287.5px;width:600px;text-align:center;transform-origin:50% 50%;">17</span>
</div>
<div style="left:0px;top:553px;width:25px;height:1px;background:#a6a6a6;"></div>
<div class="clip" style="left:0px;top:530px;width:25px;height:23px;">
<span class="t fr" style="top:6.5px;height:18px;line-height:18px;font-size:14.67px;color:#000;left:-287.5px;width:600px;text-align:center;transform-origin:50% 50%;">18</span>
</div>
<div style="left:0px;top:577px;width:25px;height:1px;background:#a6a6a6;"></div>
<div class="clip" style="left:0px;top:554px;width:25px;height:23px;">
<span class="t fr" style="top:6.2px;height:18px;line-height:18px;font-size:14.67px;color:#000;left:-287.5px;width:600px;text-align:center;transform-origin:50% 50%;">19</span>
</div>
<div style="left:0px;top:601px;width:25px;height:1px;background:#a6a6a6;"></div>
<div class="clip" style="left:0px;top:578px;width:25px;height:23px;">
<span class="t fr" style="top:3.4px;height:18px;line-height:18px;font-size:14.67px;color:#000;left:-287.5px;width:600px;text-align:center;transform-origin:50% 50%;">20</span>
</div>
<div style="left:0px;top:618px;width:25px;height:1px;background:#a6a6a6;"></div>
<div class="clip" style="left:0px;top:602px;width:25px;height:16px;">
<span class="t fr" style="top:-0.6px;height:18px;line-height:18px;font-size:14.67px;color:#000;left:-287.5px;width:600px;text-align:center;transform-origin:50% 50%;">21</span>
</div>
<div style="left:0px;top:644px;width:25px;height:1px;background:#a6a6a6;"></div>
<div class="clip" style="left:0px;top:619px;width:25px;height:25px;">
<span class="t fr" style="top:8.2px;height:18px;line-height:18px;font-size:14.67px;color:#000;left:-287.5px;width:600px;text-align:center;transform-origin:50% 50%;">22</span>
</div>
<div style="left:0px;top:661px;width:25px;height:1px;background:#a6a6a6;"></div>
<div class="clip" style="left:0px;top:645px;width:25px;height:16px;">
<span class="t fr" style="top:-1.1px;height:18px;line-height:18px;font-size:14.67px;color:#000;left:-287.5px;width:600px;text-align:center;transform-origin:50% 50%;">23</span>
</div>
<div style="left:0px;top:678px;width:25px;height:1px;background:#a6a6a6;"></div>
<div class="clip" style="left:0px;top:662px;width:25px;height:16px;">
<span class="t fr" style="top:-0.6px;height:18px;line-height:18px;font-size:14.67px;color:#000;left:-287.5px;width:600px;text-align:center;transform-origin:50% 50%;">24</span>
</div>
<div style="left:0px;top:695px;width:25px;height:1px;background:#a6a6a6;"></div>
<div class="clip" style="left:0px;top:679px;width:25px;height:16px;">
<span class="t fr" style="top:-0.6px;height:18px;line-height:18px;font-size:14.67px;color:#000;left:-287.5px;width:600px;text-align:center;transform-origin:50% 50%;">25</span>
</div>
<div style="left:0px;top:712px;width:25px;height:1px;background:#a6a6a6;"></div>
<div class="clip" style="left:0px;top:696px;width:25px;height:16px;">
<span class="t fr" style="top:-1.7px;height:18px;line-height:18px;font-size:14.67px;color:#000;left:-287.5px;width:600px;text-align:center;transform-origin:50% 50%;">26</span>
</div>
<div style="left:0px;top:729px;width:25px;height:1px;background:#a6a6a6;"></div>
<div class="clip" style="left:0px;top:713px;width:25px;height:16px;">
<span class="t fr" style="top:-0.8px;height:18px;line-height:18px;font-size:14.67px;color:#000;left:-287.5px;width:600px;text-align:center;transform-origin:50% 50%;">27</span>
</div>
<div style="left:0px;top:746px;width:25px;height:1px;background:#a6a6a6;"></div>
<div class="clip" style="left:0px;top:730px;width:25px;height:16px;">
<span class="t fr" style="top:-0.6px;height:18px;line-height:18px;font-size:14.67px;color:#000;left:-287.5px;width:600px;text-align:center;transform-origin:50% 50%;">28</span>
</div>
<div style="left:0px;top:763px;width:25px;height:1px;background:#a6a6a6;"></div>
<div class="clip" style="left:0px;top:747px;width:25px;height:16px;">
<span class="t fr" style="top:-0.6px;height:18px;line-height:18px;font-size:14.67px;color:#000;left:-287.5px;width:600px;text-align:center;transform-origin:50% 50%;">29</span>
</div>
<div style="left:0px;top:780px;width:25px;height:1px;background:#a6a6a6;"></div>
<div class="clip" style="left:0px;top:764px;width:25px;height:16px;">
<span class="t fr" style="top:-0.6px;height:18px;line-height:18px;font-size:14.67px;color:#000;left:-287.5px;width:600px;text-align:center;transform-origin:50% 50%;">30</span>
</div>
<div style="left:0px;top:797px;width:25px;height:1px;background:#a6a6a6;"></div>
<div class="clip" style="left:0px;top:781px;width:25px;height:16px;">
<span class="t fr" style="top:-0.85px;height:18px;line-height:18px;font-size:14.67px;color:#000;left:-287.5px;width:600px;text-align:center;transform-origin:50% 50%;">31</span>
</div>
<div style="left:0px;top:814px;width:25px;height:1px;background:#a6a6a6;"></div>
<div class="clip" style="left:0px;top:798px;width:25px;height:16px;">
<span class="t fr" style="top:-0.8px;height:18px;line-height:18px;font-size:14.67px;color:#000;left:-287.5px;width:600px;text-align:center;transform-origin:50% 50%;">32</span>
</div>
<div style="left:0px;top:831px;width:25px;height:1px;background:#a6a6a6;"></div>
<div class="clip" style="left:0px;top:815px;width:25px;height:16px;">
<span class="t fr" style="top:-1.1px;height:18px;line-height:18px;font-size:14.67px;color:#000;left:-287.5px;width:600px;text-align:center;transform-origin:50% 50%;">33</span>
</div>
<div style="left:0px;top:848px;width:25px;height:1px;background:#a6a6a6;"></div>
<div class="clip" style="left:0px;top:832px;width:25px;height:16px;">
<span class="t fr" style="top:-0.6px;height:18px;line-height:18px;font-size:14.67px;color:#000;left:-287.5px;width:600px;text-align:center;transform-origin:50% 50%;">34</span>
</div>
<div style="left:0px;top:865px;width:25px;height:1px;background:#a6a6a6;"></div>
<div class="clip" style="left:0px;top:849px;width:25px;height:16px;">
<span class="t fr" style="top:-0.6px;height:18px;line-height:18px;font-size:14.67px;color:#000;left:-287.5px;width:600px;text-align:center;transform-origin:50% 50%;">35</span>
</div>
<div style="left:0px;top:882px;width:25px;height:1px;background:#a6a6a6;"></div>
<div class="clip" style="left:0px;top:866px;width:25px;height:16px;">
<span class="t fr" style="top:-0.85px;height:18px;line-height:18px;font-size:14.67px;color:#000;left:-287.5px;width:600px;text-align:center;transform-origin:50% 50%;">36</span>
</div>
<div style="left:0px;top:899px;width:25px;height:1px;background:#a6a6a6;"></div>
<div class="clip" style="left:0px;top:883px;width:25px;height:16px;">
<span class="t fr" style="top:-0.8px;height:18px;line-height:18px;font-size:14.67px;color:#000;left:-287.5px;width:600px;text-align:center;transform-origin:50% 50%;">37</span>
</div>
<div style="left:0px;top:916px;width:25px;height:1px;background:#a6a6a6;"></div>
<div class="clip" style="left:0px;top:900px;width:25px;height:16px;">
<span class="t fr" style="top:-0.3px;height:18px;line-height:18px;font-size:14.67px;color:#000;left:-287.5px;width:600px;text-align:center;transform-origin:50% 50%;">38</span>
</div>
<div style="left:0px;top:931px;width:25px;height:1px;background:#a6a6a6;"></div>
<div class="clip" style="left:0px;top:917px;width:25px;height:14px;">
<span class="t fr" style="top:-2.7px;height:18px;line-height:18px;font-size:14.67px;color:#000;left:-287.5px;width:600px;text-align:center;transform-origin:50% 50%;">39</span>
</div>
<div style="left:0px;top:946px;width:25px;height:1px;background:#a6a6a6;"></div>
<div class="clip" style="left:0px;top:932px;width:25px;height:14px;">
<span class="t fr" style="top:-2.7px;height:18px;line-height:18px;font-size:14.67px;color:#000;left:-287.5px;width:600px;text-align:center;transform-origin:50% 50%;">40</span>
</div>
<div style="left:0px;top:961px;width:25px;height:1px;background:#a6a6a6;"></div>
<div class="clip" style="left:0px;top:947px;width:25px;height:14px;">
<span class="t fr" style="top:-2.7px;height:18px;line-height:18px;font-size:14.67px;color:#000;left:-287.5px;width:600px;text-align:center;transform-origin:50% 50%;">41</span>
</div>
<div style="left:0px;top:976px;width:25px;height:1px;background:#a6a6a6;"></div>
<div class="clip" style="left:0px;top:962px;width:25px;height:14px;">
<span class="t fr" style="top:-2.7px;height:18px;line-height:18px;font-size:14.67px;color:#000;left:-287.5px;width:600px;text-align:center;transform-origin:50% 50%;">42</span>
</div>
<div style="left:0px;top:991px;width:25px;height:1px;background:#a6a6a6;"></div>
<div class="clip" style="left:0px;top:977px;width:25px;height:5px;">
<span class="t fr" style="top:-2.8px;height:18px;line-height:18px;font-size:14.67px;color:#000;left:-287.5px;width:600px;text-align:center;transform-origin:50% 50%;">43</span>
</div>
<svg style="left:34px;top:277px;" width="17" height="15" viewBox="0 0 17 15"><g fill="none" stroke="#1fa445" stroke-width="1.9" stroke-linecap="round"><path d="M6.4 1.4C5.6 5.6 4.5 9.6 3.2 13.2"/><path d="M11.4 0.9C10.5 5.2 9.4 9.6 8 13.8"/><path d="M0.9 8.8c4.2-1.5 9.2-2.7 14.8-3.4"/></g></svg>
<span class="t fs" style="top:274.5px;height:10px;line-height:10px;font-size:7.6px;color:#1fa445;font-weight:700;font-style:italic;left:55px;transform-origin:0 50%;transform:scaleX(0.9688);">假日酒店</span>
<span class="t fs" style="top:282.3px;height:10px;line-height:10px;font-size:7.8px;color:#1fa445;font-weight:700;font-style:italic;left:54.5px;transform-origin:0 50%;transform:scaleX(0.9398);">Holiday Inn</span>
<div style="left:55px;top:293.3px;width:25px;height:1.2px;background:#b9b9b9;"></div>
<div style="left:55px;top:298.8px;width:12px;height:1.2px;background:#8fd0a0;"></div>
<div style="left:55px;top:302.3px;width:26px;height:1.2px;background:#a9dcb6;"></div>
<div style="left:153px;top:275px;width:37.5px;height:18.5px;background:#0d3b86;border-radius:1px"></div>
<svg style="left:153px;top:275px;" width="20" height="19" viewBox="0 0 20 19"><g fill="none" stroke="#fff" stroke-width="2" stroke-linecap="round"><path d="M8.600 2.200C8 6.500 6.800 11 5.400 14.800"/><path d="M13.500 1.400C12.800 6.500 11.600 12 10 16.800"/><path d="M2.600 10.700c4.600-2.300 10-4.200 15.600-5.200" stroke-width="1.700"/></g></svg>
<div style="left:171.6px;top:275.5px;width:1px;height:17.5px;background:rgba(255,255,255,.38);"></div>
<div style="left:174px;top:279px;width:15px;height:1.7px;background:rgba(255,255,255,.8);"></div>
<div style="left:174px;top:282.6px;width:15px;height:1.7px;background:rgba(255,255,255,.5);"></div>
<div style="left:174px;top:286px;width:15px;height:2.8px;background:rgba(255,255,255,.85);"></div>
<div style="left:158px;top:296.7px;width:28px;height:2.2px;background:#c4c4c4;"></div>
<div style="left:165px;top:302.5px;width:14.5px;height:2.2px;background:#7b91be;"></div>
<div style="left:160px;top:306.5px;width:24px;height:2px;background:#9aabd0;"></div>
<span class="t fr" style="top:266.5px;height:24px;line-height:24px;font-size:18.5px;color:#000;font-weight:700;letter-spacing:1.2px;left:122.5px;width:600px;text-align:center;transform-origin:50% 50%;transform:scaleX(0.9653);">付款申请表</span>
<span class="t fr" style="top:303.0px;height:24px;line-height:24px;font-size:19px;color:#000;font-weight:700;left:123px;width:600px;text-align:center;transform-origin:50% 50%;transform:scaleX(1.0171);">PAYMENT REQUISITION</span>
<div style="left:308px;top:323px;width:230px;height:2px;background:#000;"></div>
<div style="left:674.5px;top:276.75px;width:11.5px;height:9px;background:#fff;box-sizing:border-box;border:1px solid #000"></div>
<span class="t fr" style="top:274.0px;height:14px;line-height:14px;font-size:10.7px;color:#000;left:690px;transform-origin:0 50%;transform:scaleX(0.9819);">CASH</span>
<span class="t fr" style="top:272.5px;height:16px;line-height:16px;font-size:12px;color:#000;left:828px;transform-origin:0 50%;">现金</span>
<div style="left:674.5px;top:293.75px;width:11.5px;height:9px;background:#fff;box-sizing:border-box;border:1px solid #000"></div>
<span class="t fr" style="top:289.6px;height:14px;line-height:14px;font-size:10.7px;color:#000;left:690px;transform-origin:0 50%;transform:scaleX(1.0382);">CHEQUE</span>
<span class="t fr" style="top:289.0px;height:16px;line-height:16px;font-size:12px;color:#000;left:828px;transform-origin:0 50%;">支票</span>
<div style="left:674.5px;top:315.5px;width:11.5px;height:9px;background:#fff;box-sizing:border-box;border:1px solid #000"></div>
<span class="t fr" style="top:309.5px;height:14px;line-height:14px;font-size:10.7px;color:#000;left:690px;transform-origin:0 50%;transform:scaleX(1.0843);">REMITTANCE</span>
<span class="t fr" style="top:309.0px;height:16px;line-height:16px;font-size:12px;color:#000;left:828px;transform-origin:0 50%;">汇款</span>
<div style="left:675.5px;top:331.5px;width:11.5px;height:9px;background:#fff;box-sizing:border-box;border:1px solid #000"></div>
<span class="t fr" style="top:327.5px;height:14px;line-height:14px;font-size:10.7px;color:#000;left:690px;transform-origin:0 50%;transform:scaleX(1.0947);">OTHER</span>
<span class="t fr" style="top:327.0px;height:16px;line-height:16px;font-size:12px;color:#000;left:828px;transform-origin:0 50%;">其它</span>
<div style="left:731.5px;top:340px;width:35.25px;height:1px;background:#000;"></div>
<span class="t fr" style="top:375.5px;height:17px;line-height:17px;font-size:13px;color:#000;left:27.5px;transform-origin:0 50%;transform:scaleX(0.9087);">致: 财务部</span>
<span class="t fr" style="top:374.8px;height:17px;line-height:17px;font-size:13px;color:#000;left:370.75px;transform-origin:0 50%;transform:scaleX(0.9952);">传票号码</span>
<span class="t fr" style="top:392.5px;height:16px;line-height:16px;font-size:12.2px;color:#000;left:28px;transform-origin:0 50%;">TO: FINANCE</span>
<span class="t fr" style="top:392.5px;height:16px;line-height:16px;font-size:12.2px;color:#000;left:370.75px;transform-origin:0 50%;transform:scaleX(0.9128);">PV NO :</span>
<div style="left:416px;top:407px;width:202.75px;height:1px;background:#000;"></div>
<span class="t fr" style="top:415.0px;height:17px;line-height:17px;font-size:13px;color:#000;left:28px;transform-origin:0 50%;">由</span>
<span class="t fr" style="top:415.0px;height:17px;line-height:17px;font-size:13px;color:#000;left:267px;transform-origin:0 50%;transform:scaleX(1.0060);">部门 / 分部</span>
<span class="t fr" style="top:414.8px;height:17px;line-height:17px;font-size:13px;color:#000;left:371.75px;transform-origin:0 50%;transform:scaleX(0.9423);">日期</span>
<span class="t fr" style="top:435.75px;height:16px;line-height:16px;font-size:12.2px;color:#000;left:28px;transform-origin:0 50%;transform:scaleX(1.0248);">FROM :</span>
<span class="t fr" style="top:435.75px;height:16px;line-height:16px;font-size:12.2px;color:#000;left:370.75px;transform-origin:0 50%;transform:scaleX(1.0046);">DATE :</span>
<span class="t fr" style="top:413.0px;height:19px;line-height:19px;font-size:14.6px;color:#000;left:103.75px;transform-origin:0 50%;transform:scaleX(0.9722);">前厅部</span>
<span class="t fs" style="top:415.3px;height:16px;line-height:16px;font-size:12.5px;color:#000;left:503px;transform-origin:0 50%;transform:scaleX(0.9908);">2024年12月18日</span>
<div style="left:73px;top:450px;width:133.5px;height:1px;background:#000;"></div>
<span class="t fr" style="top:435.75px;height:16px;line-height:16px;font-size:12.2px;color:#000;left:206.5px;transform-origin:0 50%;transform:scaleX(1.0056);">( DEPT / SECTION )</span>
<div style="left:413.75px;top:450px;width:210.5px;height:1px;background:#000;"></div>
<span class="t fr" style="top:457.8px;height:17px;line-height:17px;font-size:13px;color:#000;left:28px;transform-origin:0 50%;">收款单位</span>
<span class="t fr" style="top:457.8px;height:17px;line-height:17px;font-size:13px;color:#000;left:365.75px;transform-origin:0 50%;transform:scaleX(0.9936);">开户行</span>
<span class="t fr" style="top:457.8px;height:17px;line-height:17px;font-size:13px;color:#000;left:603.25px;transform-origin:0 50%;">帐号</span>
<span class="t fr" style="top:479.2px;height:16px;line-height:16px;font-size:12.2px;color:#000;left:28px;transform-origin:0 50%;transform:scaleX(1.0237);">PAYEE :</span>
<span class="t fr" style="top:479.2px;height:16px;line-height:16px;font-size:12.2px;color:#000;left:365.75px;transform-origin:0 50%;transform:scaleX(1.0679);">BANK :</span>
<span class="t fr" style="top:479.2px;height:16px;line-height:16px;font-size:12.2px;color:#000;left:603.25px;transform-origin:0 50%;transform:scaleX(1.0467);">A/C :</span>
<div style="left:637px;top:493px;width:210px;height:1px;background:#000;"></div>
<span class="t fr" style="top:458.3px;height:16px;line-height:16px;font-size:12.5px;color:#000;left:103.75px;transform-origin:0 50%;transform:scaleX(0.9615);">钟晨晨</span>
<span class="t fr" style="top:458.3px;height:16px;line-height:16px;font-size:12.5px;color:#000;left:446.25px;transform-origin:0 50%;transform:scaleX(0.9615);">中国银行</span>
<span class="t fs" style="top:458.3px;height:16px;line-height:16px;font-size:12.5px;color:#000;left:661.25px;transform-origin:0 50%;transform:scaleX(1.0051);">623208 2800021700239</span>
<div style="left:76px;top:493px;width:266px;height:1px;background:#000;"></div>
<div style="left:100px;top:493px;width:165.5px;height:2px;background:#000;"></div>
<div style="left:413.75px;top:493px;width:185.75px;height:1px;background:#000;"></div>
<span class="t fr" style="top:512.5px;height:17px;line-height:17px;font-size:13px;color:#000;left:28.75px;transform-origin:0 50%;transform:scaleX(0.9563);">金额 人民币（大写）</span>
<span class="t fr" style="top:537.5px;height:16px;line-height:16px;font-size:12.2px;color:#000;left:28px;transform-origin:0 50%;transform:scaleX(1.0397);">AMOUNT  (RMB) :</span>
<div style="left:155px;top:553px;width:670.75px;height:1px;background:#000;"></div>
<div style="left:658px;top:505px;width:1px;height:48px;background:#000;"></div>
<div style="left:658px;top:505px;width:167.75px;height:1px;background:#000;"></div>
<span class="t fr" style="top:536.5px;height:17px;line-height:17px;font-size:13px;color:#000;left:190px;transform-origin:0 50%;">壹佰叁拾柒元伍角伍分</span>
<span class="t fm" style="top:538.2px;height:15px;line-height:15px;font-size:11.6px;color:#000;left:215.75px;width:600px;text-align:right;transform-origin:100% 50%;">¥137.55</span>
<span class="t fr" style="top:581.5px;height:17px;line-height:17px;font-size:13px;color:#000;left:28px;transform-origin:0 50%;transform:scaleX(1.0096);">用途</span>
<span class="t fr" style="top:581.5px;height:17px;line-height:17px;font-size:13px;color:#000;left:370.75px;transform-origin:0 50%;">采购单号码</span>
<span class="t fr" style="top:602.4px;height:16px;line-height:16px;font-size:12.2px;color:#000;left:28px;transform-origin:0 50%;transform:scaleX(1.0468);">PARTICULARS :</span>
<div style="left:155px;top:618px;width:214px;height:1px;background:#000;"></div>
<span class="t fr" style="top:602.4px;height:16px;line-height:16px;font-size:12.2px;color:#000;left:370.75px;transform-origin:0 50%;transform:scaleX(0.9785);">P.R.NO :</span>
<div style="left:419px;top:617px;width:203px;height:1px;background:#000;"></div>
<span class="t fs" style="top:582.0px;height:16px;line-height:16px;font-size:12px;color:#000;left:190px;transform-origin:0 50%;">停车场出口指示牌，A4水牌报销</span>
<span class="t fr" style="top:627.5px;height:17px;line-height:17px;font-size:13px;color:#000;letter-spacing:0.6px;left:29.25px;transform-origin:0 50%;transform:scaleX(0.9066);">申请人</span>
<span class="t fr" style="top:627.5px;height:17px;line-height:17px;font-size:13px;color:#000;left:370.75px;transform-origin:0 50%;">核对</span>
<span class="t fr" style="top:645.1px;height:16px;line-height:16px;font-size:12.2px;color:#000;left:28px;transform-origin:0 50%;transform:scaleX(0.9839);">REQUESTED BY :</span>
<div style="left:127.5px;top:660px;width:195.5px;height:1px;background:#000;"></div>
<span class="t fr" style="top:645.1px;height:16px;line-height:16px;font-size:12.2px;color:#000;left:371px;transform-origin:0 50%;transform:scaleX(0.9572);">VERIFIED BY :</span>
<div style="left:453px;top:660px;width:161.25px;height:1px;background:#000;"></div>
<span class="t fr" style="top:663.3px;height:16px;line-height:16px;font-size:12px;color:#000;left:648px;transform-origin:0 50%;transform:scaleX(0.9896);">部门经理</span>
<span class="t fr" style="top:679.0px;height:16px;line-height:16px;font-size:12.2px;color:#000;left:607px;transform-origin:0 50%;transform:scaleX(1.0308);">( DEPARTMENT HEAD )</span>
<div style="left:26px;top:711px;width:1894px;height:2px;background:#000;"></div>
<span class="t fr" style="top:712.8px;height:17px;line-height:17px;font-size:13px;color:#000;font-weight:700;letter-spacing:0.6px;left:231px;width:600px;text-align:center;transform-origin:50% 50%;">财务部填写</span>
<span class="t fr" style="top:730.75px;height:16px;line-height:16px;font-size:12.2px;color:#000;font-weight:700;left:231px;width:600px;text-align:center;transform-origin:50% 50%;transform:scaleX(1.0197);">( FOR ACCOUNTS PAYABLE SECTION USE )</span>
<span class="t fr" style="top:747.8px;height:17px;line-height:17px;font-size:13px;color:#000;left:28px;transform-origin:0 50%;transform:scaleX(0.9135);">日期</span>
<span class="t fr" style="top:747.8px;height:17px;line-height:17px;font-size:13px;color:#000;left:370.75px;transform-origin:0 50%;transform:scaleX(0.9038);">准备</span>
<span class="t fr" style="top:764.5px;height:16px;line-height:16px;font-size:12.2px;color:#000;left:28px;transform-origin:0 50%;transform:scaleX(1.0281);">DATE:</span>
<div style="left:67px;top:779px;width:251.75px;height:1px;background:#000;"></div>
<span class="t fr" style="top:764.5px;height:16px;line-height:16px;font-size:12.2px;color:#000;left:370.75px;transform-origin:0 50%;transform:scaleX(1.0097);">PREPARED BY:</span>
<div style="left:458.75px;top:779px;width:203.25px;height:1px;background:#000;"></div>
<span class="t fr" style="top:781.5px;height:17px;line-height:17px;font-size:13px;color:#000;left:28px;transform-origin:0 50%;transform:scaleX(0.9038);">支票号码</span>
<span class="t fr" style="top:781.5px;height:17px;line-height:17px;font-size:13px;color:#000;left:370.75px;transform-origin:0 50%;transform:scaleX(0.9038);">复核</span>
<span class="t fr" style="top:798.5px;height:16px;line-height:16px;font-size:12.2px;color:#000;left:28px;transform-origin:0 50%;transform:scaleX(0.9868);">CHEQUE NO:</span>
<div style="left:104.25px;top:813px;width:215.75px;height:1px;background:#000;"></div>
<span class="t fr" style="top:798.5px;height:16px;line-height:16px;font-size:12.2px;color:#000;left:370.75px;transform-origin:0 50%;transform:scaleX(0.9869);">CHECKED BY:</span>
<div style="left:453.25px;top:813px;width:209.75px;height:1px;background:#000;"></div>
<div style="left:26px;top:830px;width:1894px;height:2px;background:#000;"></div>
<span class="t fr" style="top:884.0px;height:16px;line-height:16px;font-size:12.5px;color:#000;font-weight:700;left:28px;transform-origin:0 50%;transform:scaleX(0.9615);">批准</span>
<span class="t fr" style="top:900.75px;height:16px;line-height:16px;font-size:12.2px;color:#000;font-weight:700;left:28px;transform-origin:0 50%;transform:scaleX(0.9545);">APPROVED BY:</span>
<div style="left:187px;top:899px;width:182px;height:1px;background:#000;"></div>
<div style="left:600.5px;top:899px;width:225.25px;height:1px;background:#000;"></div>
<span class="t fr" style="top:900.2px;height:16px;line-height:16px;font-size:12.5px;color:#000;font-weight:700;left:-22.75px;width:600px;text-align:center;transform-origin:50% 50%;transform:scaleX(0.9712);">业主财务</span>
<span class="t fr" style="top:915.75px;height:16px;line-height:16px;font-size:12.2px;color:#000;font-weight:700;left:-16.6px;width:600px;text-align:center;transform-origin:50% 50%;transform:scaleX(0.9367);">OWNER FINANCIAL LEADER</span>
<span class="t fr" style="top:900.2px;height:16px;line-height:16px;font-size:12.5px;color:#000;font-weight:700;left:447.1px;width:600px;text-align:center;transform-origin:50% 50%;transform:scaleX(0.9952);">财务总监</span>
<span class="t fr" style="top:915.75px;height:16px;line-height:16px;font-size:12.2px;color:#000;font-weight:700;left:431.25px;width:600px;text-align:center;transform-origin:50% 50%;transform:scaleX(0.9799);">DIRECTOR, FINANCE &amp; BUSINESS SUPPORT</span>
<div style="left:0px;top:982px;width:1920px;height:29px;background:#e6e6e6;"></div>
<div style="left:0px;top:982px;width:1920px;height:1px;background:#a0a0a0;"></div>
<div style="left:100px;top:982px;width:32px;height:23px;background:#fff;"></div>
<div style="left:100px;top:1005px;width:32px;height:2px;background:#217346;"></div>
<div style="left:100px;top:982px;width:1px;height:23px;background:#b4b4b4;"></div>
<div style="left:131px;top:982px;width:1px;height:23px;background:#b4b4b4;"></div>
<span class="t fs" style="top:986.3px;height:16px;line-height:16px;font-size:12px;color:#217346;left:-184.5px;width:600px;text-align:center;transform-origin:50% 50%;">1</span>
<svg style="left:25px;top:990px;" width="8" height="10" viewBox="0 0 8 10"><path d="M6 1L2 5l4 4z" fill="#c2c2c2"/></svg>
<svg style="left:53px;top:990px;" width="8" height="10" viewBox="0 0 8 10"><path d="M2 1l4 4-4 4z" fill="#c2c2c2"/></svg>
<svg style="left:164px;top:987px;" width="17" height="17" viewBox="0 0 17 17"><circle cx="8.500" cy="8.500" r="7.400" fill="none" stroke="#7a7a7a" stroke-width="1.100"/><path d="M8.500 4.600v7.800M4.600 8.500h7.800" stroke="#5e5e5e" stroke-width="1.900"/></svg>
<div style="left:0px;top:1011px;width:1920px;height:21px;background:#f3f3f3;"></div>
<div style="left:0px;top:1010px;width:1920px;height:1px;background:#d8d8d8;"></div>
<span class="t fs" style="top:1013.0px;height:16px;line-height:16px;font-size:12px;color:#333;left:8px;transform-origin:0 50%;transform:scaleX(0.9917);">输入</span>
<div style="left:960px;top:46px;width:970px;height:987px;background:transparent;box-shadow:0 0 7px 0 rgba(0,0,0,.45)"></div>
<div class="clip" style="left:960px;top:46px;width:960px;height:986px;background:#fff">
<div style="left:-960px;top:-46px;width:1920px;height:1080px">
<div style="left:960px;top:46px;width:960px;height:67px;background:#217346;"></div>
<svg style="left:983px;top:57px;" width="15" height="15" viewBox="0 0 15 15"><rect x="0.9" y="0.9" width="12.6" height="12.6" fill="none" stroke="#fff" stroke-width="1.8"/><rect x="1" y="7.7" width="12.4" height="1.9" fill="#fff"/><rect x="5" y="11" width="1.9" height="2" fill="#fff"/></svg>
<svg style="left:1011px;top:56px;" width="16" height="14" viewBox="0 0 16 14"><g fill="none" stroke="rgba(255,255,255,.38)" stroke-width="1.7"><path d="M6.3 1.6L2.2 5.6l4.1 4"/><path d="M2.6 5.6h7.2a4 4 0 0 1 0 7.6H7.6"/></g></svg>
<svg style="left:1032px;top:62px;" width="6" height="4" viewBox="0 0 6 4"><path d="M0 0h6L3 3.4z" fill="rgba(255,255,255,.38)"/></svg>
<svg style="left:1046px;top:56px;" width="16" height="14" viewBox="0 0 16 14"><g fill="none" stroke="rgba(255,255,255,.38)" stroke-width="1.7"><path d="M9.7 1.6l4.1 4-4.1 4"/><path d="M13.4 5.6H6.2a4 4 0 0 0 0 7.6h2.2"/></g></svg>
<svg style="left:1067px;top:62px;" width="6" height="4" viewBox="0 0 6 4"><path d="M0 0h6L3 3.4z" fill="rgba(255,255,255,.38)"/></svg>
<svg style="left:1085px;top:60px;" width="7" height="8" viewBox="0 0 7 8"><path d="M0.5 1.2h6" stroke="#fff" stroke-width="1.2"/><path d="M0.3 3.6h6.4L3.5 7z" fill="#fff"/></svg>
<div style="left:1022px;top:81px;width:49px;height:32px;background:#f3f3f3;"></div>
<span class="t fs" style="top:87.5px;height:16px;line-height:16px;font-size:12px;color:#217346;left:1033.5px;transform-origin:0 50%;">开始</span>
<span class="t fs" style="top:87.5px;height:16px;line-height:16px;font-size:12px;color:#fff;left:978px;transform-origin:0 50%;">文件</span>
<span class="t fs" style="top:87.5px;height:16px;line-height:16px;font-size:12px;color:#fff;left:1085px;transform-origin:0 50%;">插入</span>
<span class="t fs" style="top:87.5px;height:16px;line-height:16px;font-size:12px;color:#fff;left:1136px;transform-origin:0 50%;transform:scaleX(0.9896);">页面布局</span>
<span class="t fs" style="top:87.5px;height:16px;line-height:16px;font-size:12px;color:#fff;left:1211px;transform-origin:0 50%;">公式</span>
<span class="t fs" style="top:87.5px;height:16px;line-height:16px;font-size:12px;color:#fff;left:1262px;transform-origin:0 50%;">数据</span>
<span class="t fs" style="top:87.5px;height:16px;line-height:16px;font-size:12px;color:#fff;left:1313px;transform-origin:0 50%;">审阅</span>
<span class="t fs" style="top:87.5px;height:16px;line-height:16px;font-size:12px;color:#fff;left:1363.5px;transform-origin:0 50%;transform:scaleX(1.0208);">视图</span>
<span class="t fs" style="top:87.5px;height:16px;line-height:16px;font-size:12px;color:#fff;left:1415px;transform-origin:0 50%;">帮助</span>
<svg style="left:1464px;top:87px;" width="16" height="18" viewBox="0 0 16 18"><g fill="none" stroke="#fff" stroke-width="1.1"><path d="M8 2.2a4.6 4.6 0 0 0-2.6 8.4c.5.4.8 1 .8 1.6v.6h3.6v-.6c0-.6.3-1.2.8-1.6A4.6 4.6 0 0 0 8 2.2z"/><path d="M6.4 14.3h3.2M6.9 15.8h2.2"/></g></svg>
<span class="t fs" style="top:87.5px;height:16px;line-height:16px;font-size:12px;color:#fff;left:1484px;transform-origin:0 50%;transform:scaleX(0.9954);">告诉我你想要做什么</span>
<span class="t fs" style="top:54.0px;height:16px;line-height:16px;font-size:12px;color:#fff;left:1330.5px;transform-origin:0 50%;transform:scaleX(1.0323);">新版付款申请表-有公式  [兼容模式]  -  Excel</span>
<span class="t fs" style="top:53.5px;height:17px;line-height:17px;font-size:13px;color:#fff;left:1681.3px;transform-origin:0 50%;transform:scaleX(0.9863);">Lilith Zhong</span>
<svg style="left:1773px;top:56px;" width="15" height="12" viewBox="0 0 15 12"><g fill="none" stroke="#fff" stroke-width="1"><path d="M1 1.5h13v9.5H1zM1 3.8h13"/><path d="M7.5 9.6V5.4M5.6 7.2l1.9-1.9 1.9 1.9"/></g></svg>
<div style="left:1822px;top:62px;width:10px;height:1px;background:#fff;"></div>
<svg style="left:1867px;top:56px;" width="12" height="12" viewBox="0 0 12 12"><path d="M1.5 1.5h9v9h-9z" fill="none" stroke="#fff" stroke-width="1"/></svg>
<svg style="left:1913px;top:56px;" width="12" height="12" viewBox="0 0 12 12"><path d="M1 1l10 10M11 1L1 11" stroke="#fff" stroke-width="1.1" fill="none"/></svg>
<svg style="left:1874px;top:87px;" width="17" height="18" viewBox="0 0 17 18"><g fill="none" stroke="#fff" stroke-width="1.2"><circle cx="8" cy="5.6" r="4.2"/><path d="M1 16.2c.4-4 2.6-6.2 5-6.6M13.4 11.4v5.4M10.7 14.1h5.4"/></g></svg>
<span class="t fs" style="top:86.5px;height:16px;line-height:16px;font-size:12px;color:#fff;left:1893.7px;transform-origin:0 50%;transform:scaleX(1.0042);">共享</span>
<div style="left:960px;top:113px;width:960px;height:94px;background:#f3f3f3;"></div>
<div style="left:960px;top:207px;width:960px;height:1px;background:#d6d6d6;"></div>
<div style="left:960px;top:208px;width:960px;height:71px;background:#e6e6e6;"></div>
<div style="left:966px;top:218px;width:102px;height:28px;background:#fff;box-sizing:border-box;border:1px solid #cfcfcf"></div>
<span class="t fs" style="top:224.5px;height:16px;line-height:16px;font-size:12px;color:#444;left:972px;transform-origin:0 50%;transform:scaleX(1.0300);">P15</span>
<svg style="left:1053px;top:228px;" width="9" height="6" viewBox="0 0 9 6"><path d="M0.6 0.8h7.2L4.2 4.8z" fill="#666"/></svg>
<div style="left:1082px;top:227.0px;width:2px;height:2px;background:#a8a8a8;"></div>
<div style="left:1082px;top:231.5px;width:2px;height:2px;background:#a8a8a8;"></div>
<div style="left:1082px;top:236.0px;width:2px;height:2px;background:#a8a8a8;"></div>
<div style="left:1098px;top:218px;width:110px;height:28px;background:#fff;box-sizing:border-box;border:1px solid #cfcfcf"></div>
<svg style="left:1111px;top:226px;" width="12" height="12" viewBox="0 0 12 12"><path d="M1.5 1.5l9 9M10.5 1.5l-9 9" stroke="#555" stroke-width="1.6" fill="none"/></svg>
<svg style="left:1146px;top:225px;" width="14" height="13" viewBox="0 0 14 13"><path d="M1.5 7.5l3.6 3.8L12.5 2" stroke="#555" stroke-width="2.1" fill="none"/></svg>
<span class="t fr" style="top:221.0px;height:20px;line-height:20px;font-size:15px;color:#4a4a4a;font-weight:700;font-style:italic;left:1182px;transform-origin:0 50%;">f</span>
<span class="t fr" style="top:228.5px;height:12px;line-height:12px;font-size:9.5px;color:#4a4a4a;font-weight:700;font-style:italic;left:1188px;transform-origin:0 50%;">x</span>
<div style="left:1211px;top:218px;width:1700px;height:50px;background:#fff;box-sizing:border-box;border:1px solid #cfcfcf"></div>
<svg style="left:974px;top:120px;" width="30" height="32" viewBox="0 0 30 32"><rect x="0.2" y="4" width="23.3" height="25" rx="1.5" fill="#d9d5d9"/><rect x="5" y="1.4" width="13.6" height="5.8" rx="1" fill="#b6b1b6"/><rect x="9" y="0" width="5.6" height="3.4" rx="1.6" fill="#b6b1b6"/><circle cx="11.8" cy="2.2" r="1" fill="#f3f3f3"/><path d="M14 12.2h9.6l4.4 4.4v14.2H14z" fill="#f7f3f7" stroke="#cac5ca" stroke-width="1"/><path d="M23.6 12.2v4.4H28" fill="none" stroke="#cac5ca" stroke-width="1"/></svg>
<span class="t fs" style="top:152.5px;height:16px;line-height:16px;font-size:12px;color:#a8a8a8;left:974px;transform-origin:0 50%;transform:scaleX(0.9792);">粘贴</span>
<svg style="left:985.0px;top:174.0px;" width="5" height="3" viewBox="0 0 5 3"><path d="M0 0h5L2.5 3z" fill="#c0c0c0"/></svg>
<svg style="left:1010px;top:119px;" width="15" height="16" viewBox="0 0 15 16"><path d="M3.2 0.8l6.6 9.4M11.8 0.8L5.2 10.2" stroke="#5a5a5a" stroke-width="1.9" fill="none"/><circle cx="3.3" cy="12.6" r="2.4" fill="none" stroke="#3f6fb7" stroke-width="1.3"/><circle cx="11.7" cy="12.6" r="2.4" fill="none" stroke="#3f6fb7" stroke-width="1.3"/></svg>
<svg style="left:1010px;top:142px;" width="16" height="15" viewBox="0 0 16 15"><path d="M0.5 0.5h5.5l2.5 2.5v7.5h-8z" fill="#fff" stroke="#6e6e6e" stroke-width="1"/><path d="M2.5 4.5h2.5M2.5 7.5h2.5" stroke="#3f6fb7" stroke-width="1"/><path d="M6.5 4.5h5.5l2.5 2.5v7.500h-8z" fill="#fff" stroke="#6e6e6e" stroke-width="1"/><path d="M8.5 8.500h4.5M8.5 10.500h4.5M8.5 12.500h4.5" stroke="#3f6fb7" stroke-width="1"/></svg>
<svg style="left:1032.0px;top:149.0px;" width="5" height="3" viewBox="0 0 5 3"><path d="M0 0h5L2.5 3z" fill="#666"/></svg>
<svg style="left:1010px;top:166px;" width="17" height="15" viewBox="0 0 17 15"><path d="M0.5 8.5l5-2.5 4.5 4.5-3.5 4z" fill="#cfcfcf"/><path d="M6.3 5.3l2.2-2.1 4.7 4.6-2.2 2.2z" fill="#c2c2c2"/><path d="M10.4 3.2l3.4-2.8 2.4 2.4-3.2 3.1z" fill="#c2c2c2"/></svg>
<span class="t fs" style="top:188.7px;height:16px;line-height:16px;font-size:12px;color:#444;left:977.5px;transform-origin:0 50%;transform:scaleX(0.9722);">剪贴板</span>
<svg style="left:1035px;top:195px;" width="8" height="8" viewBox="0 0 8 8"><path d="M0.5 5V0.5H5" fill="none" stroke="#7a7a7a" stroke-width="1"/><path d="M2.8 2.8l3.4 3.4" fill="none" stroke="#7a7a7a" stroke-width="1.1"/><path d="M7.6 3.4v4.2H3.4z" fill="#7a7a7a"/></svg>
<div style="left:1046px;top:117px;width:1px;height:86px;background:#dadada;"></div>
<div style="left:1051.5px;top:124.5px;width:197.0px;height:22.0px;background:#fff;box-sizing:border-box;border:1px solid #c6c6c6"></div>
<div style="left:1207.5px;top:124.5px;width:1px;height:22.0px;background:#c6c6c6;"></div>
<span class="t fs" style="top:127.2px;height:17px;line-height:17px;font-size:13px;color:#3a3a3a;left:1054.5px;transform-origin:0 50%;transform:scaleX(0.9814);">Times New Roman</span>
<svg style="left:1197.5px;top:134.0px;" width="5" height="3" viewBox="0 0 5 3"><path d="M0 0h5L2.5 3z" fill="#666"/></svg>
<span class="t fs" style="top:127.2px;height:17px;line-height:17px;font-size:13px;color:#3a3a3a;left:1212px;transform-origin:0 50%;transform:scaleX(0.9192);">10</span>
<svg style="left:1237.8px;top:134.0px;" width="5" height="3" viewBox="0 0 5 3"><path d="M0 0h5L2.5 3z" fill="#666"/></svg>
<svg style="left:1254px;top:128px;" width="13" height="14" viewBox="0 0 13 14"><text x="0" y="13" font-size="14" fill="#444" font-family="Liberation Sans">A</text><path d="M8 3.3L10.3 0.4 12.6 3.3z" fill="#3f6fb7"/></svg>
<svg style="left:1278px;top:128px;" width="13" height="14" viewBox="0 0 13 14"><text x="0" y="13" font-size="11.5" fill="#444" font-family="Liberation Sans">A</text><path d="M7.6 0.6h4.8L10 3.6z" fill="#3f6fb7"/></svg>
<div style="left:1296px;top:117px;width:1px;height:86px;background:#dadada;"></div>
<span class="t fs" style="top:156.7px;height:18px;line-height:18px;font-size:13.5px;color:#3a3a3a;font-weight:700;left:1057.5px;transform-origin:0 50%;">B</span>
<span class="t fr" style="top:156.7px;height:18px;line-height:18px;font-size:14px;color:#3a3a3a;font-weight:700;font-style:italic;left:1080.5px;transform-origin:0 50%;">I</span>
<span class="t fs" style="top:156.5px;height:18px;line-height:18px;font-size:13.5px;color:#3a3a3a;left:1101px;transform-origin:0 50%;text-decoration:underline;text-underline-offset:2px">U</span>
<svg style="left:1119.8px;top:165.0px;" width="5" height="3" viewBox="0 0 5 3"><path d="M0 0h5L2.5 3z" fill="#666"/></svg>
<div style="left:1133px;top:156px;width:1px;height:21px;background:#dadada;"></div>
<svg style="left:1142px;top:159px;" width="13" height="13" viewBox="0 0 13 13"><path d="M0 0.5h13" stroke="#a6a6a6" stroke-width="1" stroke-dasharray="1 1"/><path d="M0 6.5h13" stroke="#a6a6a6" stroke-width="1" stroke-dasharray="1 1"/><path d="M0.5 0v12" stroke="#a6a6a6" stroke-width="1" stroke-dasharray="1 1"/><path d="M6.5 0v12" stroke="#a6a6a6" stroke-width="1" stroke-dasharray="1 1"/><path d="M12.5 0v12" stroke="#a6a6a6" stroke-width="1" stroke-dasharray="1 1"/><rect x="0" y="12" width="13" height="1" fill="#a6a6a6"/></svg>
<svg style="left:1162.8px;top:165.0px;" width="5" height="3" viewBox="0 0 5 3"><path d="M0 0h5L2.5 3z" fill="#bdbdbd"/></svg>
<div style="left:1176px;top:156px;width:1px;height:21px;background:#dadada;"></div>
<svg style="left:1184px;top:157px;" width="17" height="17" viewBox="0 0 17 17"><path d="M3 8.2l5.6-5.6 4.8 4.8-5.6 5.6H6.4z" fill="none" stroke="#bcbcbc" stroke-width="1.1"/><path d="M6.3 0.9c1-.8 2.3-.2 2.3 1v2.6" fill="none" stroke="#bcbcbc" stroke-width="1"/><path d="M13.6 7.4c1 1.6 1.7 2.6 1.7 3.5a1.4 1.4 0 0 1-2.8 0c0-.9.4-1.9 1.1-3.5z" fill="#c9c9c9"/><rect x="0" y="13" width="16" height="4" fill="#e6e6e6"/></svg>
<svg style="left:1205.8px;top:165.0px;" width="5" height="3" viewBox="0 0 5 3"><path d="M0 0h5L2.5 3z" fill="#bdbdbd"/></svg>
<svg style="left:1218px;top:157px;" width="16" height="17" viewBox="0 0 16 17"><text x="8" y="12.2" text-anchor="middle" font-size="14" fill="#595959" font-family="Liberation Sans">A</text><rect x="0" y="13" width="16" height="4" fill="#ff0000"/></svg>
<svg style="left:1239.8px;top:165.0px;" width="5" height="3" viewBox="0 0 5 3"><path d="M0 0h5L2.5 3z" fill="#666"/></svg>
<div style="left:1254px;top:156px;width:1px;height:21px;background:#dadada;"></div>
<svg style="left:1262px;top:158px;" width="17" height="17" viewBox="0 0 17 17"><text x="8.5" y="7" text-anchor="middle" font-size="8.8" fill="#b5b5b5" font-family="Liberation Sans">wén</text><text x="8.5" y="16.2" text-anchor="middle" font-size="8.6" font-weight="700" fill="#b5b5b5" font-family="Liberation Sans">文</text></svg>
<svg style="left:1283.0px;top:165.0px;" width="5" height="3" viewBox="0 0 5 3"><path d="M0 0h5L2.5 3z" fill="#bdbdbd"/></svg>
<span class="t fs" style="top:188.5px;height:16px;line-height:16px;font-size:12px;color:#444;left:1151px;transform-origin:0 50%;">字体</span>
<svg style="left:1285px;top:195px;" width="8" height="8" viewBox="0 0 8 8"><path d="M0.5 5V0.5H5" fill="none" stroke="#7a7a7a" stroke-width="1"/><path d="M2.8 2.8l3.4 3.4" fill="none" stroke="#7a7a7a" stroke-width="1.1"/><path d="M7.6 3.4v4.2H3.4z" fill="#7a7a7a"/></svg>
<svg style="left:1305px;top:126px;" width="14" height="10" viewBox="0 0 14 10"><rect x="0" y="1" width="14" height="1" fill="#b4b4b4"/><rect x="0" y="4" width="14" height="1" fill="#b4b4b4"/><rect x="0" y="7" width="14" height="1" fill="#b4b4b4"/></svg>
<svg style="left:1327px;top:130px;" width="14" height="10" viewBox="0 0 14 10"><rect x="0" y="1" width="14" height="1" fill="#b4b4b4"/><rect x="0" y="4" width="14" height="1" fill="#b4b4b4"/><rect x="0" y="7" width="14" height="1" fill="#b4b4b4"/></svg>
<svg style="left:1349px;top:135px;" width="14" height="10" viewBox="0 0 14 10"><rect x="0" y="1" width="14" height="1" fill="#b4b4b4"/><rect x="0" y="4" width="14" height="1" fill="#b4b4b4"/><rect x="0" y="7" width="14" height="1" fill="#b4b4b4"/></svg>
<svg style="left:1305px;top:161px;" width="14" height="12" viewBox="0 0 14 12"><rect x="0" y="0" width="14" height="1" fill="#b4b4b4"/><rect x="0" y="3" width="9" height="1" fill="#b4b4b4"/><rect x="0" y="6" width="14" height="1" fill="#b4b4b4"/><rect x="0" y="9" width="9" height="1" fill="#b4b4b4"/></svg>
<svg style="left:1327px;top:161px;" width="14" height="12" viewBox="0 0 14 12"><rect x="0.0" y="0" width="14" height="1" fill="#b4b4b4"/><rect x="2.5" y="3" width="9" height="1" fill="#b4b4b4"/><rect x="0.0" y="6" width="14" height="1" fill="#b4b4b4"/><rect x="2.5" y="9" width="9" height="1" fill="#b4b4b4"/></svg>
<svg style="left:1349px;top:161px;" width="14" height="12" viewBox="0 0 14 12"><rect x="0" y="0" width="14" height="1" fill="#b4b4b4"/><rect x="5" y="3" width="9" height="1" fill="#b4b4b4"/><rect x="0" y="6" width="14" height="1" fill="#b4b4b4"/><rect x="5" y="9" width="9" height="1" fill="#b4b4b4"/></svg>
<svg style="left:1372px;top:127px;" width="18" height="16" viewBox="0 0 18 16"><text transform="translate(4.400,12) rotate(-45)" font-size="11" fill="#b4b4b4" font-family="Liberation Sans">ab</text><path d="M6.200 14.800L15.800 5.600M11.800 5.300H16.100V9.600" fill="none" stroke="#b4b4b4" stroke-width="1.100"/></svg>
<svg style="left:1393.5px;top:134.0px;" width="5" height="3" viewBox="0 0 5 3"><path d="M0 0h5L2.5 3z" fill="#bdbdbd"/></svg>
<svg style="left:1372px;top:159px;" width="16" height="13" viewBox="0 0 16 13"><rect x="0" y="0" width="16" height="1" fill="#b8b8b8"/><rect x="0" y="12" width="16" height="1" fill="#b8b8b8"/><rect x="8" y="3" width="8" height="1" fill="#b8b8b8"/><rect x="8" y="6" width="8" height="1" fill="#b8b8b8"/><rect x="8" y="9" width="8" height="1" fill="#b8b8b8"/><path d="M6.300 6.500H1M3.300 4L0.800 6.500 3.300 9" fill="none" stroke="#b8b8b8" stroke-width="1.400"/></svg>
<svg style="left:1395px;top:159px;" width="16" height="13" viewBox="0 0 16 13"><rect x="0" y="0" width="16" height="1" fill="#b8b8b8"/><rect x="0" y="12" width="16" height="1" fill="#b8b8b8"/><rect x="8" y="3" width="8" height="1" fill="#b8b8b8"/><rect x="8" y="6" width="8" height="1" fill="#b8b8b8"/><rect x="8" y="9" width="8" height="1" fill="#b8b8b8"/><path d="M0.300 6.500h5.400M3.400 4l2.500 2.500L3.400 9" fill="none" stroke="#b8b8b8" stroke-width="1.400"/></svg>
<div style="left:1418px;top:123px;width:1px;height:55px;background:#dadada;"></div>
<svg style="left:1427px;top:128px;" width="14" height="16" viewBox="0 0 14 16"><text x="0.600" y="7.300" font-size="9.800" textLength="11.600" lengthAdjust="spacingAndGlyphs" fill="#a8a8a8" font-family="Liberation Sans">ab</text><text x="0.600" y="14.900" font-size="9.800" fill="#a8a8a8" font-family="Liberation Sans">c</text><path d="M12.800 9.800v2.700H9.200M10.800 10.800L9 12.500l1.800 1.700" fill="none" stroke="#a8a8a8" stroke-width="1.050"/></svg>
<svg style="left:1426px;top:158px;" width="16" height="16" viewBox="0 0 16 16"><path d="M0.500 0.500h14v14h-14zM0.500 3.500h14M0.500 11.500h14M7.500 0.500v3M7.500 11.500v3" fill="none" stroke="#b0b0b0" stroke-width="1"/><path d="M3 7.500h9M4.800 5.700L3 7.500l1.800 1.800M10.200 5.700L12 7.500l-1.800 1.800" fill="none" stroke="#b0b0b0" stroke-width="1"/></svg>
<svg style="left:1448.1px;top:165.0px;" width="5" height="3" viewBox="0 0 5 3"><path d="M0 0h5L2.5 3z" fill="#bdbdbd"/></svg>
<span class="t fs" style="top:188.7px;height:16px;line-height:16px;font-size:12px;color:#444;left:1347.5px;transform-origin:0 50%;transform:scaleX(0.9896);">对齐方式</span>
<svg style="left:1451px;top:196px;" width="8" height="8" viewBox="0 0 8 8"><path d="M0.5 5V0.5H5" fill="none" stroke="#c2c2c2" stroke-width="1"/><path d="M2.8 2.8l3.4 3.4" fill="none" stroke="#c2c2c2" stroke-width="1.1"/><path d="M7.6 3.4v4.2H3.4z" fill="#c2c2c2"/></svg>
<div style="left:1462px;top:117px;width:1px;height:86px;background:#dadada;"></div>
<div style="left:1467px;top:116.5px;width:77.5px;height:22.0px;background:#fff;box-sizing:border-box;border:1px solid #c6c6c6"></div>
<span class="t fs" style="top:119.5px;height:16px;line-height:16px;font-size:12px;color:#a6a6a6;left:1470.4px;transform-origin:0 50%;transform:scaleX(0.9833);">常规</span>
<svg style="left:1534.8px;top:126.0px;" width="5" height="3" viewBox="0 0 5 3"><path d="M0 0h5L2.5 3z" fill="#bdbdbd"/></svg>
<svg style="left:1470px;top:142px;" width="18" height="18" viewBox="0 0 18 18"><rect x="0.900" y="0.900" width="16.200" height="9.200" fill="#b9b9b9"/><rect x="2.400" y="2.400" width="13.200" height="6.200" fill="#fff"/><rect x="2.400" y="4.200" width="1.300" height="2.600" fill="#b9b9b9"/><rect x="14.300" y="4.200" width="1.300" height="2.600" fill="#b9b9b9"/><circle cx="8.200" cy="5.500" r="2.200" fill="#b9b9b9"/><circle cx="8.900" cy="5.100" r=".8" fill="#fff"/><ellipse cx="13.600" cy="8.3" rx="3.700" ry="1.250" fill="#cfcfcf" stroke="#f3f3f3" stroke-width=".6"/><ellipse cx="13.600" cy="10" rx="3.700" ry="1.250" fill="#cfcfcf" stroke="#f3f3f3" stroke-width=".6"/><ellipse cx="13.600" cy="11.7" rx="3.700" ry="1.250" fill="#cfcfcf" stroke="#f3f3f3" stroke-width=".6"/><ellipse cx="13.600" cy="13.3" rx="3.700" ry="1.250" fill="#cfcfcf" stroke="#f3f3f3" stroke-width=".6"/><ellipse cx="8.300" cy="13.4" rx="3.500" ry="1.200" fill="#cfcfcf" stroke="#f3f3f3" stroke-width=".6"/><ellipse cx="8.300" cy="15" rx="3.500" ry="1.200" fill="#cfcfcf" stroke="#f3f3f3" stroke-width=".6"/><ellipse cx="8.300" cy="16.5" rx="3.500" ry="1.200" fill="#cfcfcf" stroke="#f3f3f3" stroke-width=".6"/></svg>
<svg style="left:1491.5px;top:149.5px;" width="5" height="3" viewBox="0 0 5 3"><path d="M0 0h5L2.5 3z" fill="#bdbdbd"/></svg>
<span class="t fs" style="top:141.0px;height:19px;line-height:19px;font-size:14.5px;color:#a6a6a6;left:1506.4px;transform-origin:0 50%;transform:scaleX(0.9608);">%</span>
<span class="t fr" style="top:134.8px;height:22px;line-height:22px;font-size:17px;color:#a6a6a6;font-weight:700;left:1530.8px;transform-origin:0 50%;">,</span>
<svg style="left:1470px;top:166px;" width="16" height="14" viewBox="0 0 16 14"><path d="M1 3.2h5M3 1.2l-2 2 2 2" fill="none" stroke="#9c9c9c" stroke-width="1.1"/><text x="7.2" y="6.2" font-size="8.600" fill="#9c9c9c" font-family="Liberation Sans">.0</text><text x="2.2" y="13.6" font-size="8.600" fill="#9c9c9c" font-family="Liberation Sans">.00</text></svg>
<svg style="left:1491px;top:166px;" width="16" height="14" viewBox="0 0 16 14"><text x="2.2" y="6.2" font-size="8.600" fill="#9c9c9c" font-family="Liberation Sans">.00</text><path d="M1 10.8h5.5M4.4 8.8l2 2-2 2" fill="none" stroke="#9c9c9c" stroke-width="1.1"/><text x="8" y="13.6" font-size="8.600" fill="#9c9c9c" font-family="Liberation Sans">.0</text></svg>
<span class="t fs" style="top:188.5px;height:16px;line-height:16px;font-size:12px;color:#444;left:1486px;transform-origin:0 50%;transform:scaleX(0.9875);">数字</span>
<svg style="left:1538px;top:195px;" width="8" height="8" viewBox="0 0 8 8"><path d="M0.5 5V0.5H5" fill="none" stroke="#c2c2c2" stroke-width="1"/><path d="M2.8 2.8l3.4 3.4" fill="none" stroke="#c2c2c2" stroke-width="1.1"/><path d="M7.6 3.4v4.2H3.4z" fill="#c2c2c2"/></svg>
<div style="left:1549px;top:117px;width:1px;height:86px;background:#dadada;"></div>
<svg style="left:1557px;top:120px;" width="17" height="16" viewBox="0 0 17 16"><rect x="0.5" y="0.5" width="14" height="12" fill="none" stroke="#b2b2b2"/><path d="M0.5 4.5h14M0.5 8.5h14M4.5 0.5v12M9.5 0.5v12" stroke="#b2b2b2"/><rect x="5" y="1" width="4" height="3" fill="#b2b2b2"/><rect x="5" y="5" width="6" height="3" fill="#b2b2b2"/><rect x="8.5" y="8.5" width="8" height="7" fill="#f3f3f3" stroke="#b2b2b2"/><path d="M10.5 11h4M10.5 13h4M13.6 9.8l-2 4.4" stroke="#b2b2b2" stroke-width=".8"/></svg>
<span class="t fs" style="top:119.5px;height:16px;line-height:16px;font-size:12px;color:#a6a6a6;left:1576px;transform-origin:0 50%;transform:scaleX(1.0062);">条件格式</span>
<svg style="left:1627.7px;top:126.5px;" width="5" height="3" viewBox="0 0 5 3"><path d="M0 0h5L2.5 3z" fill="#bdbdbd"/></svg>
<svg style="left:1557px;top:142px;" width="17" height="16" viewBox="0 0 17 16"><rect x="0.5" y="0.5" width="14" height="11" fill="none" stroke="#b2b2b2"/><path d="M0.5 4h14M0.5 7.5h14M4.5 0.5v11M9.5 0.5v11" stroke="#b2b2b2"/><path d="M16.600 3.600l-5.200 7.200-2.600-1.900 5.600-7z" fill="#b2b2b2"/><path d="M8.400 9.600l2.600 1.900c-.9 2.300-3.200 3.900-7 4.500 1.600-1.700 2-4.900 4.400-6.400z" fill="#b2b2b2"/></svg>
<span class="t fs" style="top:142.5px;height:16px;line-height:16px;font-size:12px;color:#a6a6a6;left:1576px;transform-origin:0 50%;">套用表格格式</span>
<svg style="left:1652.1px;top:149.5px;" width="5" height="3" viewBox="0 0 5 3"><path d="M0 0h5L2.5 3z" fill="#bdbdbd"/></svg>
<svg style="left:1557px;top:166px;" width="17" height="16" viewBox="0 0 17 16"><rect x="0.5" y="0.5" width="14" height="11" fill="none" stroke="#b2b2b2"/><path d="M0.5 4h14" stroke="#b2b2b2"/><path d="M16.600 3.600l-5.200 7.200-2.600-1.900 5.600-7z" fill="#b2b2b2"/><path d="M8.400 9.600l2.600 1.900c-.9 2.300-3.200 3.900-7 4.500 1.600-1.700 2-4.900 4.400-6.400z" fill="#b2b2b2"/></svg>
<span class="t fs" style="top:165.3px;height:16px;line-height:16px;font-size:12px;color:#a6a6a6;left:1576px;transform-origin:0 50%;transform:scaleX(1.0067);">单元格样式</span>
<svg style="left:1639.9px;top:172.5px;" width="5" height="3" viewBox="0 0 5 3"><path d="M0 0h5L2.5 3z" fill="#bdbdbd"/></svg>
<span class="t fs" style="top:188.5px;height:16px;line-height:16px;font-size:12px;color:#444;left:1597.2px;transform-origin:0 50%;transform:scaleX(1.0125);">样式</span>
<div style="left:1668px;top:117px;width:1px;height:86px;background:#dadada;"></div>
<svg style="left:1676px;top:120px;" width="17" height="16" viewBox="0 0 17 16"><g fill="none" stroke="#b2b2b2" stroke-width="1.300"><rect x="0.700" y="0.700" width="4" height="3.600"/><rect x="4.700" y="0.700" width="4" height="3.600"/><rect x="0.700" y="11.500" width="4" height="3.600"/><rect x="4.700" y="11.500" width="4" height="3.600"/><rect x="7.300" y="6.100" width="4" height="3.600"/><rect x="11.300" y="6.100" width="4" height="3.600"/><path d="M6 7.900H1.200M3.200 5.900l-2 2 2 2"/></g></svg>
<span class="t fs" style="top:119.5px;height:16px;line-height:16px;font-size:12px;color:#a6a6a6;left:1695.2px;transform-origin:0 50%;transform:scaleX(0.9917);">插入</span>
<svg style="left:1728.7px;top:126.5px;" width="5" height="3" viewBox="0 0 5 3"><path d="M0 0h5L2.5 3z" fill="#bdbdbd"/></svg>
<svg style="left:1676px;top:142px;" width="17" height="16" viewBox="0 0 17 16"><g fill="none" stroke="#b2b2b2" stroke-width="1.300"><rect x="0.700" y="0.700" width="4" height="3.600"/><rect x="4.700" y="0.700" width="4" height="3.600"/><rect x="0.700" y="11.500" width="4" height="3.600"/><rect x="4.700" y="11.500" width="4" height="3.600"/><rect x="2.700" y="6.100" width="3.600" height="3.600"/><path d="M9.800 3.200l5.600 5.600M15.400 3.200L9.800 8.800"/></g></svg>
<span class="t fs" style="top:142.5px;height:16px;line-height:16px;font-size:12px;color:#a6a6a6;left:1695.2px;transform-origin:0 50%;transform:scaleX(0.9917);">删除</span>
<svg style="left:1728.7px;top:149.5px;" width="5" height="3" viewBox="0 0 5 3"><path d="M0 0h5L2.5 3z" fill="#bdbdbd"/></svg>
<svg style="left:1676px;top:164px;" width="16" height="17" viewBox="0 0 16 17"><path d="M0.500 1.800h14M0.500 0v3.600M14.500 0v3.600M4.200 1.800l1.500-1.300M4.200 1.800l1.500 1.300M10.800 1.800L9.300 0.500M10.800 1.800L9.300 3.100" fill="none" stroke="#3f6fb7" stroke-width="1"/><path d="M0.500 5.500h14v9c-4 1.600-10 1.600-14 0z" fill="#fff" stroke="#6e6e6e"/><path d="M0.500 8.500h14M0.500 11.700h14M3.500 5.500v9.800M8.500 5.500v10.200M11.500 5.500v9.800" stroke="#6e6e6e" stroke-width=".9" fill="none"/><rect x="4" y="8.900" width="4" height="2.600" fill="#3f6fb7"/></svg>
<span class="t fs" style="top:165.3px;height:16px;line-height:16px;font-size:12px;color:#222;left:1695.2px;transform-origin:0 50%;transform:scaleX(0.9917);">格式</span>
<svg style="left:1723.0px;top:172.5px;" width="5" height="3" viewBox="0 0 5 3"><path d="M0 0h5L2.5 3z" fill="#444"/></svg>
<span class="t fs" style="top:188.5px;height:16px;line-height:16px;font-size:12px;color:#444;left:1688px;transform-origin:0 50%;transform:scaleX(0.9917);">单元格</span>
<div style="left:1743px;top:117px;width:1px;height:86px;background:#dadada;"></div>
<svg style="left:1751px;top:119px;" width="16" height="15" viewBox="0 0 16 15"><path d="M14.500 3.400V0.900H1.300l6.300 6.500-6.300 6.700h13.200v-2.600" fill="none" stroke="#333" stroke-width="1.700"/></svg>
<svg style="left:1772.5px;top:126.5px;" width="5" height="3" viewBox="0 0 5 3"><path d="M0 0h5L2.5 3z" fill="#444"/></svg>
<svg style="left:1786px;top:118px;" width="17" height="17" viewBox="0 0 17 17"><text x="0" y="7.200" font-size="9" fill="#b2b2b2" font-family="Liberation Sans">A</text><text x="0.300" y="16.300" font-size="9" fill="#b2b2b2" font-family="Liberation Sans">Z</text><path d="M8 4.500h8.400l-3.100 3.400v4.300l-2.200 1.200V7.900z" fill="#b2b2b2"/></svg>
<svg style="left:1805.9px;top:126.5px;" width="5" height="3" viewBox="0 0 5 3"><path d="M0 0h5L2.5 3z" fill="#bdbdbd"/></svg>
<svg style="left:1752px;top:142px;" width="15" height="16" viewBox="0 0 15 16"><rect x="0.500" y="0.500" width="13.500" height="15" fill="#f7f4f7" stroke="#b2b2b2"/><rect x="0.500" y="0.500" width="13.500" height="3" fill="#b2b2b2"/><path d="M7.200 5.800v7.400M3.900 10l3.300 3.400 3.300-3.400" fill="none" stroke="#b2b2b2" stroke-width="1.700"/></svg>
<svg style="left:1770.7px;top:149.5px;" width="5" height="3" viewBox="0 0 5 3"><path d="M0 0h5L2.5 3z" fill="#bdbdbd"/></svg>
<svg style="left:1787px;top:143px;" width="14" height="14" viewBox="0 0 14 14"><circle cx="8.600" cy="5.200" r="4" fill="#fff" stroke="#3f6fb7" stroke-width="1.700"/><path d="M5.800 8.200L1 13" stroke="#3f6fb7" stroke-width="2.200"/></svg>
<svg style="left:1805.9px;top:149.5px;" width="5" height="3" viewBox="0 0 5 3"><path d="M0 0h5L2.5 3z" fill="#444"/></svg>
<svg style="left:1752px;top:166px;" width="15" height="13" viewBox="0 0 15 13"><path d="M10.400 0.100L13.700 4.500 4.200 12.700 0.700 8z" fill="#e8738a"/><path d="M2.900 6.200l3.400 4.700" stroke="#f6c8d1" stroke-width=".9" fill="none"/></svg>
<svg style="left:1770.7px;top:172.5px;" width="5" height="3" viewBox="0 0 5 3"><path d="M0 0h5L2.5 3z" fill="#444"/></svg>
<span class="t fs" style="top:188.5px;height:16px;line-height:16px;font-size:12px;color:#444;left:1769.7px;transform-origin:0 50%;transform:scaleX(1.0125);">编辑</span>
<div style="left:1820px;top:117px;width:1px;height:86px;background:#dadada;"></div>
<div style="left:961px;top:279px;width:959px;height:748px;background:#fff;"></div>
<div style="left:961px;top:279px;width:959px;height:18px;background:#e6e6e6;"></div>
<div style="left:961px;top:279px;width:25px;height:748px;background:#e6e6e6;"></div>
<svg style="left:970px;top:281px;" width="14" height="14" viewBox="0 0 14 14"><path d="M13 1.5V13H1.5z" fill="#b7b7b7"/></svg>
<div style="left:1061px;top:278px;width:1px;height:19px;background:#a6a6a6;"></div>
<span class="t fr" style="top:278.8px;height:18px;line-height:18px;font-size:14.67px;color:#000;left:724.0px;width:600px;text-align:center;transform-origin:50% 50%;">A</span>
<div style="left:1116px;top:278px;width:1px;height:19px;background:#a6a6a6;"></div>
<span class="t fr" style="top:278.8px;height:18px;line-height:18px;font-size:14.67px;color:#000;left:789.0px;width:600px;text-align:center;transform-origin:50% 50%;">B</span>
<div style="left:1148px;top:278px;width:1px;height:19px;background:#a6a6a6;"></div>
<span class="t fr" style="top:278.8px;height:18px;line-height:18px;font-size:14.67px;color:#000;left:832.5px;width:600px;text-align:center;transform-origin:50% 50%;">C</span>
<div style="left:1186px;top:278px;width:1px;height:19px;background:#a6a6a6;"></div>
<span class="t fr" style="top:278.8px;height:18px;line-height:18px;font-size:14.67px;color:#000;left:867.5px;width:600px;text-align:center;transform-origin:50% 50%;">D</span>
<div style="left:1226px;top:278px;width:1px;height:19px;background:#a6a6a6;"></div>
<span class="t fr" style="top:278.8px;height:18px;line-height:18px;font-size:14.67px;color:#000;left:906.5px;width:600px;text-align:center;transform-origin:50% 50%;">E</span>
<div style="left:1247px;top:278px;width:1px;height:19px;background:#a6a6a6;"></div>
<span class="t fr" style="top:278.8px;height:18px;line-height:18px;font-size:14.67px;color:#000;left:937.0px;width:600px;text-align:center;transform-origin:50% 50%;">F</span>
<div style="left:1268px;top:278px;width:1px;height:19px;background:#a6a6a6;"></div>
<span class="t fr" style="top:278.8px;height:18px;line-height:18px;font-size:14.67px;color:#000;left:958.0px;width:600px;text-align:center;transform-origin:50% 50%;">G</span>
<div style="left:1289px;top:278px;width:1px;height:19px;background:#a6a6a6;"></div>
<span class="t fr" style="top:278.8px;height:18px;line-height:18px;font-size:14.67px;color:#000;left:979.0px;width:600px;text-align:center;transform-origin:50% 50%;">H</span>
<div style="left:1306px;top:278px;width:1px;height:19px;background:#a6a6a6;"></div>
<span class="t fr" style="top:278.8px;height:18px;line-height:18px;font-size:14.67px;color:#000;left:998.0px;width:600px;text-align:center;transform-origin:50% 50%;">I</span>
<div style="left:1322px;top:278px;width:1px;height:19px;background:#a6a6a6;"></div>
<span class="t fr" style="top:278.8px;height:18px;line-height:18px;font-size:14.67px;color:#000;left:1014.5px;width:600px;text-align:center;transform-origin:50% 50%;">J</span>
<div style="left:1326px;top:278px;width:1px;height:19px;background:#a6a6a6;"></div>
<div style="left:1367px;top:278px;width:1px;height:19px;background:#a6a6a6;"></div>
<span class="t fr" style="top:278.8px;height:18px;line-height:18px;font-size:14.67px;color:#000;left:1046.9px;width:600px;text-align:center;transform-origin:50% 50%;">L</span>
<div style="left:1441px;top:278px;width:1px;height:19px;background:#a6a6a6;"></div>
<span class="t fr" style="top:278.8px;height:18px;line-height:18px;font-size:14.67px;color:#000;left:1104.2px;width:600px;text-align:center;transform-origin:50% 50%;">M</span>
<div style="left:1599px;top:278px;width:1px;height:19px;background:#a6a6a6;"></div>
<span class="t fr" style="top:278.8px;height:18px;line-height:18px;font-size:14.67px;color:#000;left:1220.2px;width:600px;text-align:center;transform-origin:50% 50%;">N</span>
<div style="left:1657px;top:278px;width:1px;height:19px;background:#a6a6a6;"></div>
<span class="t fr" style="top:278.8px;height:18px;line-height:18px;font-size:14.67px;color:#000;left:1328.2px;width:600px;text-align:center;transform-origin:50% 50%;">O</span>
<div style="left:1657.25px;top:279px;width:29.0px;height:18px;background:#d2d2d2;"></div>
<div style="left:1657.25px;top:295px;width:29.0px;height:2px;background:#217346;"></div>
<div style="left:1686px;top:278px;width:1px;height:19px;background:#a6a6a6;"></div>
<span class="t fr" style="top:278.8px;height:18px;line-height:18px;font-size:14.67px;color:#217346;left:1371.8px;width:600px;text-align:center;transform-origin:50% 50%;">P</span>
<div style="left:1736px;top:278px;width:1px;height:19px;background:#a6a6a6;"></div>
<span class="t fr" style="top:278.8px;height:18px;line-height:18px;font-size:14.67px;color:#000;left:1411.2px;width:600px;text-align:center;transform-origin:50% 50%;">Q</span>
<div style="left:1824px;top:278px;width:1px;height:19px;background:#a6a6a6;"></div>
<span class="t fr" style="top:278.8px;height:18px;line-height:18px;font-size:14.67px;color:#000;left:1480.2px;width:600px;text-align:center;transform-origin:50% 50%;">R</span>
<div style="left:2038px;top:278px;width:1px;height:19px;background:#a6a6a6;"></div>
<span class="t fr" style="top:278.8px;height:18px;line-height:18px;font-size:14.67px;color:#000;left:1628.8px;width:600px;text-align:center;transform-origin:50% 50%;">S</span>
<div style="left:961px;top:297px;width:959px;height:1px;background:#9a9a9a;"></div>
<div style="left:986px;top:279px;width:1px;height:748px;background:#9a9a9a;"></div>
<div style="left:961px;top:312px;width:25px;height:1px;background:#a6a6a6;"></div>
<div class="clip" style="left:961px;top:298px;width:25px;height:14px;">
<span class="t fr" style="top:-2.1px;height:18px;line-height:18px;font-size:14.67px;color:#000;left:-287.5px;width:600px;text-align:center;transform-origin:50% 50%;">1</span>
</div>
<div style="left:961px;top:336px;width:25px;height:1px;background:#a6a6a6;"></div>
<div class="clip" style="left:961px;top:313px;width:25px;height:23px;">
<span class="t fr" style="top:5.4px;height:18px;line-height:18px;font-size:14.67px;color:#000;left:-287.5px;width:600px;text-align:center;transform-origin:50% 50%;">2</span>
</div>
<div style="left:961px;top:352px;width:25px;height:1px;background:#a6a6a6;"></div>
<div class="clip" style="left:961px;top:337px;width:25px;height:15px;">
<span class="t fr" style="top:-2.35px;height:18px;line-height:18px;font-size:14.67px;color:#000;left:-287.5px;width:600px;text-align:center;transform-origin:50% 50%;">3</span>
</div>
<div style="left:961px;top:373px;width:25px;height:1px;background:#a6a6a6;"></div>
<div class="clip" style="left:961px;top:353px;width:25px;height:20px;">
<span class="t fr" style="top:0.9px;height:18px;line-height:18px;font-size:14.67px;color:#000;left:-287.5px;width:600px;text-align:center;transform-origin:50% 50%;">4</span>
</div>
<div style="left:961px;top:389px;width:25px;height:1px;background:#a6a6a6;"></div>
<div class="clip" style="left:961px;top:374px;width:25px;height:15px;">
<span class="t fr" style="top:-1.35px;height:18px;line-height:18px;font-size:14.67px;color:#000;left:-287.5px;width:600px;text-align:center;transform-origin:50% 50%;">5</span>
</div>
<div style="left:961px;top:405px;width:25px;height:1px;background:#a6a6a6;"></div>
<div class="clip" style="left:961px;top:390px;width:25px;height:15px;">
<span class="t fr" style="top:-1.6px;height:18px;line-height:18px;font-size:14.67px;color:#000;left:-287.5px;width:600px;text-align:center;transform-origin:50% 50%;">6</span>
</div>
<div style="left:961px;top:421px;width:25px;height:1px;background:#a6a6a6;"></div>
<div class="clip" style="left:961px;top:406px;width:25px;height:15px;">
<span class="t fr" style="top:-1.35px;height:18px;line-height:18px;font-size:14.67px;color:#000;left:-287.5px;width:600px;text-align:center;transform-origin:50% 50%;">7</span>
</div>
<div style="left:961px;top:438px;width:25px;height:1px;background:#a6a6a6;"></div>
<div class="clip" style="left:961px;top:422px;width:25px;height:16px;">
<span class="t fr" style="top:-0.6px;height:18px;line-height:18px;font-size:14.67px;color:#000;left:-287.5px;width:600px;text-align:center;transform-origin:50% 50%;">8</span>
</div>
<div style="left:961px;top:455px;width:25px;height:1px;background:#a6a6a6;"></div>
<div class="clip" style="left:961px;top:439px;width:25px;height:16px;">
<span class="t fr" style="top:-0.6px;height:18px;line-height:18px;font-size:14.67px;color:#000;left:-287.5px;width:600px;text-align:center;transform-origin:50% 50%;">9</span>
</div>
<div style="left:961px;top:461px;width:25px;height:1px;background:#a6a6a6;"></div>
<div class="clip" style="left:961px;top:456px;width:25px;height:5px;">
<span class="t fr" style="top:-10.3px;height:18px;line-height:18px;font-size:14.67px;color:#000;left:-287.5px;width:600px;text-align:center;transform-origin:50% 50%;">10</span>
</div>
<div style="left:961px;top:480px;width:25px;height:1px;background:#a6a6a6;"></div>
<div class="clip" style="left:961px;top:462px;width:25px;height:18px;">
<span class="t fr" style="top:-0.35px;height:18px;line-height:18px;font-size:14.67px;color:#000;left:-287.5px;width:600px;text-align:center;transform-origin:50% 50%;">11</span>
</div>
<div style="left:961px;top:498px;width:25px;height:1px;background:#a6a6a6;"></div>
<div class="clip" style="left:961px;top:481px;width:25px;height:17px;">
<span class="t fr" style="top:0.65px;height:18px;line-height:18px;font-size:14.67px;color:#000;left:-287.5px;width:600px;text-align:center;transform-origin:50% 50%;">12</span>
</div>
<div style="left:961px;top:505px;width:25px;height:1px;background:#a6a6a6;"></div>
<div class="clip" style="left:961px;top:499px;width:25px;height:6px;">
<span class="t fr" style="top:-9.3px;height:18px;line-height:18px;font-size:14.67px;color:#000;left:-287.5px;width:600px;text-align:center;transform-origin:50% 50%;">13</span>
</div>
<div style="left:961px;top:524px;width:25px;height:1px;background:#a6a6a6;"></div>
<div class="clip" style="left:961px;top:506px;width:25px;height:18px;">
<span class="t fr" style="top:-1.35px;height:18px;line-height:18px;font-size:14.67px;color:#000;left:-287.5px;width:600px;text-align:center;transform-origin:50% 50%;">14</span>
</div>
<div style="left:961px;top:525px;width:25px;height:16px;background:#d2d2d2;"></div>
<div style="left:984px;top:525px;width:2px;height:16px;background:#217346;"></div>
<div style="left:961px;top:541px;width:25px;height:1px;background:#a6a6a6;"></div>
<div class="clip" style="left:961px;top:525px;width:25px;height:16px;">
<span class="t fr" style="top:-0.35px;height:18px;line-height:18px;font-size:14.67px;color:#217346;left:-287.5px;width:600px;text-align:center;transform-origin:50% 50%;">15</span>
</div>
<div style="left:961px;top:552px;width:25px;height:1px;background:#a6a6a6;"></div>
<div class="clip" style="left:961px;top:542px;width:25px;height:10px;">
<span class="t fr" style="top:-5.3px;height:18px;line-height:18px;font-size:14.67px;color:#000;left:-287.5px;width:600px;text-align:center;transform-origin:50% 50%;">16</span>
</div>
<div style="left:961px;top:576px;width:25px;height:1px;background:#a6a6a6;"></div>
<div class="clip" style="left:961px;top:553px;width:25px;height:23px;">
<span class="t fr" style="top:3.3px;height:18px;line-height:18px;font-size:14.67px;color:#000;left:-287.5px;width:600px;text-align:center;transform-origin:50% 50%;">17</span>
</div>
<div style="left:961px;top:600px;width:25px;height:1px;background:#a6a6a6;"></div>
<div class="clip" style="left:961px;top:577px;width:25px;height:23px;">
<span class="t fr" style="top:3.5px;height:18px;line-height:18px;font-size:14.67px;color:#000;left:-287.5px;width:600px;text-align:center;transform-origin:50% 50%;">18</span>
</div>
<div style="left:961px;top:624px;width:25px;height:1px;background:#a6a6a6;"></div>
<div class="clip" style="left:961px;top:601px;width:25px;height:23px;">
<span class="t fr" style="top:6.2px;height:18px;line-height:18px;font-size:14.67px;color:#000;left:-287.5px;width:600px;text-align:center;transform-origin:50% 50%;">19</span>
</div>
<div style="left:961px;top:648px;width:25px;height:1px;background:#a6a6a6;"></div>
<div class="clip" style="left:961px;top:625px;width:25px;height:23px;">
<span class="t fr" style="top:3.4px;height:18px;line-height:18px;font-size:14.67px;color:#000;left:-287.5px;width:600px;text-align:center;transform-origin:50% 50%;">20</span>
</div>
<div style="left:961px;top:665px;width:25px;height:1px;background:#a6a6a6;"></div>
<div class="clip" style="left:961px;top:649px;width:25px;height:16px;">
<span class="t fr" style="top:-1.8px;height:18px;line-height:18px;font-size:14.67px;color:#000;left:-287.5px;width:600px;text-align:center;transform-origin:50% 50%;">21</span>
</div>
<div style="left:961px;top:691px;width:25px;height:1px;background:#a6a6a6;"></div>
<div class="clip" style="left:961px;top:666px;width:25px;height:25px;">
<span class="t fr" style="top:7.1px;height:18px;line-height:18px;font-size:14.67px;color:#000;left:-287.5px;width:600px;text-align:center;transform-origin:50% 50%;">22</span>
</div>
<div style="left:961px;top:708px;width:25px;height:1px;background:#a6a6a6;"></div>
<div class="clip" style="left:961px;top:692px;width:25px;height:16px;">
<span class="t fr" style="top:-1.1px;height:18px;line-height:18px;font-size:14.67px;color:#000;left:-287.5px;width:600px;text-align:center;transform-origin:50% 50%;">23</span>
</div>
<div style="left:961px;top:725px;width:25px;height:1px;background:#a6a6a6;"></div>
<div class="clip" style="left:961px;top:709px;width:25px;height:16px;">
<span class="t fr" style="top:-0.6px;height:18px;line-height:18px;font-size:14.67px;color:#000;left:-287.5px;width:600px;text-align:center;transform-origin:50% 50%;">24</span>
</div>
<div style="left:961px;top:742px;width:25px;height:1px;background:#a6a6a6;"></div>
<div class="clip" style="left:961px;top:726px;width:25px;height:16px;">
<span class="t fr" style="top:-0.6px;height:18px;line-height:18px;font-size:14.67px;color:#000;left:-287.5px;width:600px;text-align:center;transform-origin:50% 50%;">25</span>
</div>
<div style="left:961px;top:759px;width:25px;height:1px;background:#a6a6a6;"></div>
<div class="clip" style="left:961px;top:743px;width:25px;height:16px;">
<span class="t fr" style="top:-1.7px;height:18px;line-height:18px;font-size:14.67px;color:#000;left:-287.5px;width:600px;text-align:center;transform-origin:50% 50%;">26</span>
</div>
<div style="left:961px;top:776px;width:25px;height:1px;background:#a6a6a6;"></div>
<div class="clip" style="left:961px;top:760px;width:25px;height:16px;">
<span class="t fr" style="top:-0.8px;height:18px;line-height:18px;font-size:14.67px;color:#000;left:-287.5px;width:600px;text-align:center;transform-origin:50% 50%;">27</span>
</div>
<div style="left:961px;top:793px;width:25px;height:1px;background:#a6a6a6;"></div>
<div class="clip" style="left:961px;top:777px;width:25px;height:16px;">
<span class="t fr" style="top:-0.6px;height:18px;line-height:18px;font-size:14.67px;color:#000;left:-287.5px;width:600px;text-align:center;transform-origin:50% 50%;">28</span>
</div>
<div style="left:961px;top:810px;width:25px;height:1px;background:#a6a6a6;"></div>
<div class="clip" style="left:961px;top:794px;width:25px;height:16px;">
<span class="t fr" style="top:-0.6px;height:18px;line-height:18px;font-size:14.67px;color:#000;left:-287.5px;width:600px;text-align:center;transform-origin:50% 50%;">29</span>
</div>
<div style="left:961px;top:827px;width:25px;height:1px;background:#a6a6a6;"></div>
<div class="clip" style="left:961px;top:811px;width:25px;height:16px;">
<span class="t fr" style="top:-0.6px;height:18px;line-height:18px;font-size:14.67px;color:#000;left:-287.5px;width:600px;text-align:center;transform-origin:50% 50%;">30</span>
</div>
<div style="left:961px;top:844px;width:25px;height:1px;background:#a6a6a6;"></div>
<div class="clip" style="left:961px;top:828px;width:25px;height:16px;">
<span class="t fr" style="top:-0.85px;height:18px;line-height:18px;font-size:14.67px;color:#000;left:-287.5px;width:600px;text-align:center;transform-origin:50% 50%;">31</span>
</div>
<div style="left:961px;top:861px;width:25px;height:1px;background:#a6a6a6;"></div>
<div class="clip" style="left:961px;top:845px;width:25px;height:16px;">
<span class="t fr" style="top:-0.8px;height:18px;line-height:18px;font-size:14.67px;color:#000;left:-287.5px;width:600px;text-align:center;transform-origin:50% 50%;">32</span>
</div>
<div style="left:961px;top:878px;width:25px;height:1px;background:#a6a6a6;"></div>
<div class="clip" style="left:961px;top:862px;width:25px;height:16px;">
<span class="t fr" style="top:-1.1px;height:18px;line-height:18px;font-size:14.67px;color:#000;left:-287.5px;width:600px;text-align:center;transform-origin:50% 50%;">33</span>
</div>
<div style="left:961px;top:895px;width:25px;height:1px;background:#a6a6a6;"></div>
<div class="clip" style="left:961px;top:879px;width:25px;height:16px;">
<span class="t fr" style="top:-0.6px;height:18px;line-height:18px;font-size:14.67px;color:#000;left:-287.5px;width:600px;text-align:center;transform-origin:50% 50%;">34</span>
</div>
<div style="left:961px;top:912px;width:25px;height:1px;background:#a6a6a6;"></div>
<div class="clip" style="left:961px;top:896px;width:25px;height:16px;">
<span class="t fr" style="top:-0.6px;height:18px;line-height:18px;font-size:14.67px;color:#000;left:-287.5px;width:600px;text-align:center;transform-origin:50% 50%;">35</span>
</div>
<div style="left:961px;top:929px;width:25px;height:1px;background:#a6a6a6;"></div>
<div class="clip" style="left:961px;top:913px;width:25px;height:16px;">
<span class="t fr" style="top:-0.85px;height:18px;line-height:18px;font-size:14.67px;color:#000;left:-287.5px;width:600px;text-align:center;transform-origin:50% 50%;">36</span>
</div>
<div style="left:961px;top:946px;width:25px;height:1px;background:#a6a6a6;"></div>
<div class="clip" style="left:961px;top:930px;width:25px;height:16px;">
<span class="t fr" style="top:-0.8px;height:18px;line-height:18px;font-size:14.67px;color:#000;left:-287.5px;width:600px;text-align:center;transform-origin:50% 50%;">37</span>
</div>
<div style="left:961px;top:963px;width:25px;height:1px;background:#a6a6a6;"></div>
<div class="clip" style="left:961px;top:947px;width:25px;height:16px;">
<span class="t fr" style="top:-0.3px;height:18px;line-height:18px;font-size:14.67px;color:#000;left:-287.5px;width:600px;text-align:center;transform-origin:50% 50%;">38</span>
</div>
<div style="left:961px;top:978px;width:25px;height:1px;background:#a6a6a6;"></div>
<div class="clip" style="left:961px;top:964px;width:25px;height:14px;">
<span class="t fr" style="top:-2.7px;height:18px;line-height:18px;font-size:14.67px;color:#000;left:-287.5px;width:600px;text-align:center;transform-origin:50% 50%;">39</span>
</div>
<div style="left:961px;top:993px;width:25px;height:1px;background:#a6a6a6;"></div>
<div class="clip" style="left:961px;top:979px;width:25px;height:14px;">
<span class="t fr" style="top:-2.7px;height:18px;line-height:18px;font-size:14.67px;color:#000;left:-287.5px;width:600px;text-align:center;transform-origin:50% 50%;">40</span>
</div>
<div style="left:961px;top:1008px;width:25px;height:1px;background:#a6a6a6;"></div>
<div class="clip" style="left:961px;top:994px;width:25px;height:14px;">
<span class="t fr" style="top:-2.7px;height:18px;line-height:18px;font-size:14.67px;color:#000;left:-287.5px;width:600px;text-align:center;transform-origin:50% 50%;">41</span>
</div>
<div style="left:961px;top:1023px;width:25px;height:1px;background:#a6a6a6;"></div>
<div class="clip" style="left:961px;top:1009px;width:25px;height:14px;">
<span class="t fr" style="top:-2.7px;height:18px;line-height:18px;font-size:14.67px;color:#000;left:-287.5px;width:600px;text-align:center;transform-origin:50% 50%;">42</span>
</div>
<div style="left:961px;top:1038px;width:25px;height:1px;background:#a6a6a6;"></div>
<div class="clip" style="left:961px;top:1024px;width:25px;height:3px;">
<span class="t fr" style="top:-2.8px;height:18px;line-height:18px;font-size:14.67px;color:#000;left:-287.5px;width:600px;text-align:center;transform-origin:50% 50%;">43</span>
</div>
<svg style="left:995px;top:324px;" width="17" height="15" viewBox="0 0 17 15"><g fill="none" stroke="#1fa445" stroke-width="1.9" stroke-linecap="round"><path d="M6.4 1.4C5.6 5.6 4.5 9.6 3.2 13.2"/><path d="M11.4 0.9C10.5 5.2 9.4 9.6 8 13.8"/><path d="M0.9 8.8c4.2-1.5 9.2-2.7 14.8-3.4"/></g></svg>
<span class="t fs" style="top:321.5px;height:10px;line-height:10px;font-size:7.6px;color:#1fa445;font-weight:700;font-style:italic;left:1016px;transform-origin:0 50%;transform:scaleX(0.9688);">假日酒店</span>
<span class="t fs" style="top:329.3px;height:10px;line-height:10px;font-size:7.8px;color:#1fa445;font-weight:700;font-style:italic;left:1015.5px;transform-origin:0 50%;transform:scaleX(0.9398);">Holiday Inn</span>
<div style="left:1016px;top:340.3px;width:25px;height:1.2px;background:#b9b9b9;"></div>
<div style="left:1016px;top:345.8px;width:12px;height:1.2px;background:#8fd0a0;"></div>
<div style="left:1016px;top:349.3px;width:26px;height:1.2px;background:#a9dcb6;"></div>
<span class="t fr" style="top:313.5px;height:24px;line-height:24px;font-size:18.5px;color:#000;font-weight:700;letter-spacing:1.2px;left:1102.38px;width:600px;text-align:center;transform-origin:50% 50%;transform:scaleX(0.9653);">付款申请表</span>
<span class="t fr" style="top:350.0px;height:24px;line-height:24px;font-size:19px;color:#000;font-weight:700;left:1102.88px;width:600px;text-align:center;transform-origin:50% 50%;transform:scaleX(1.0171);">PAYMENT REQUISITION</span>
<div style="left:1287.875px;top:370px;width:230.0px;height:2px;background:#000;"></div>
<div style="left:1673.25px;top:323.75px;width:11.5px;height:9px;background:#fff;box-sizing:border-box;border:1px solid #000"></div>
<span class="t fr" style="top:321.0px;height:14px;line-height:14px;font-size:10.7px;color:#000;left:1688.75px;transform-origin:0 50%;transform:scaleX(0.9819);">CASH</span>
<span class="t fr" style="top:319.5px;height:16px;line-height:16px;font-size:12px;color:#000;left:1826.75px;transform-origin:0 50%;">现金</span>
<div style="left:1673.25px;top:340.75px;width:11.5px;height:9px;background:#fff;box-sizing:border-box;border:1px solid #000"></div>
<span class="t fr" style="top:336.6px;height:14px;line-height:14px;font-size:10.7px;color:#000;left:1688.75px;transform-origin:0 50%;transform:scaleX(1.0382);">CHEQUE</span>
<span class="t fr" style="top:336.0px;height:16px;line-height:16px;font-size:12px;color:#000;left:1826.75px;transform-origin:0 50%;">支票</span>
<div style="left:1673.25px;top:362.5px;width:11.5px;height:9px;background:#fff;box-sizing:border-box;border:1px solid #000"></div>
<span class="t fr" style="top:356.5px;height:14px;line-height:14px;font-size:10.7px;color:#000;left:1688.75px;transform-origin:0 50%;transform:scaleX(1.0843);">REMITTANCE</span>
<span class="t fr" style="top:356.0px;height:16px;line-height:16px;font-size:12px;color:#000;left:1826.75px;transform-origin:0 50%;">汇款</span>
<div style="left:1674.25px;top:378.5px;width:11.5px;height:9px;background:#fff;box-sizing:border-box;border:1px solid #000"></div>
<span class="t fr" style="top:374.5px;height:14px;line-height:14px;font-size:10.7px;color:#000;left:1688.75px;transform-origin:0 50%;transform:scaleX(1.0947);">OTHER</span>
<span class="t fr" style="top:374.0px;height:16px;line-height:16px;font-size:12px;color:#000;left:1826.75px;transform-origin:0 50%;">其它</span>
<div style="left:1730.25px;top:387px;width:35.25px;height:1px;background:#000;"></div>
<span class="t fr" style="top:422.5px;height:17px;line-height:17px;font-size:13px;color:#000;left:988.5px;transform-origin:0 50%;transform:scaleX(0.9087);">致: 财务部</span>
<span class="t fr" style="top:421.8px;height:17px;line-height:17px;font-size:13px;color:#000;left:1369.5px;transform-origin:0 50%;transform:scaleX(0.9952);">传票号码</span>
<span class="t fr" style="top:439.5px;height:16px;line-height:16px;font-size:12.2px;color:#000;left:989px;transform-origin:0 50%;">TO: FINANCE</span>
<span class="t fr" style="top:439.5px;height:16px;line-height:16px;font-size:12.2px;color:#000;left:1369.5px;transform-origin:0 50%;transform:scaleX(0.9128);">PV NO :</span>
<div style="left:1414.75px;top:454px;width:202.75px;height:1px;background:#000;"></div>
<span class="t fr" style="top:462.0px;height:17px;line-height:17px;font-size:13px;color:#000;left:989px;transform-origin:0 50%;">由</span>
<span class="t fr" style="top:462.0px;height:17px;line-height:17px;font-size:13px;color:#000;left:1228px;transform-origin:0 50%;transform:scaleX(1.0060);">部门 / 分部</span>
<span class="t fr" style="top:461.8px;height:17px;line-height:17px;font-size:13px;color:#000;left:1370.5px;transform-origin:0 50%;transform:scaleX(0.9423);">日期</span>
<span class="t fr" style="top:482.75px;height:16px;line-height:16px;font-size:12.2px;color:#000;left:989px;transform-origin:0 50%;transform:scaleX(1.0248);">FROM :</span>
<span class="t fr" style="top:482.75px;height:16px;line-height:16px;font-size:12.2px;color:#000;left:1369.5px;transform-origin:0 50%;transform:scaleX(1.0046);">DATE :</span>
<div style="left:1034.5px;top:497px;width:26.25px;height:1px;background:#000;"></div>
<span class="t fr" style="top:482.75px;height:16px;line-height:16px;font-size:12.5px;color:#000;left:1065px;transform-origin:0 50%;transform:scaleX(0.9615);">前厅部</span>
<div style="left:1412.5px;top:497px;width:28.25px;height:1px;background:#000;"></div>
<span class="t fr" style="top:482.75px;height:16px;line-height:16px;font-size:12.5px;color:#000;left:1443.75px;transform-origin:0 50%;transform:scaleX(0.9607);">2025年12月16日</span>
<span class="t fr" style="top:504.8px;height:17px;line-height:17px;font-size:13px;color:#000;left:989px;transform-origin:0 50%;">收款单位</span>
<span class="t fr" style="top:504.8px;height:17px;line-height:17px;font-size:13px;color:#000;left:1326.75px;transform-origin:0 50%;transform:scaleX(0.9936);">开户行</span>
<span class="t fr" style="top:504.8px;height:17px;line-height:17px;font-size:13px;color:#000;left:1602.0px;transform-origin:0 50%;">帐号</span>
<span class="t fr" style="top:526.2px;height:16px;line-height:16px;font-size:12.2px;color:#000;left:989px;transform-origin:0 50%;transform:scaleX(1.0237);">PAYEE :</span>
<span class="t fr" style="top:526.2px;height:16px;line-height:16px;font-size:12.2px;color:#000;left:1326.75px;transform-origin:0 50%;transform:scaleX(1.0679);">BANK :</span>
<span class="t fr" style="top:526.2px;height:16px;line-height:16px;font-size:12.2px;color:#000;left:1602.0px;transform-origin:0 50%;transform:scaleX(1.0467);">A/C :</span>
<div style="left:1635.75px;top:540px;width:210.0px;height:1px;background:#000;"></div>
<div style="left:1037px;top:540px;width:23.75px;height:1px;background:#000;"></div>
<span class="t fr" style="top:525.3px;height:16px;line-height:16px;font-size:12.5px;color:#000;left:1065px;transform-origin:0 50%;transform:scaleX(0.9615);">钟晨晨</span>
<div style="left:1060.75px;top:541px;width:166.0px;height:1px;background:#000;"></div>
<div style="left:1375px;top:540px;width:210.0px;height:1px;background:#000;"></div>
<div style="left:1656.25px;top:523px;width:32.0px;height:20px;background:transparent;box-sizing:border-box;border:2px solid #217346"></div>
<div style="left:1684.25px;top:539px;width:6px;height:6px;background:#217346;box-sizing:border-box;border:1px solid #fff;border-right:0;border-bottom:0"></div>
<div style="left:1660.25px;top:527px;width:1px;height:12px;background:#000;"></div>
<span class="t fr" style="top:556.3px;height:17px;line-height:17px;font-size:13px;color:#000;left:989.75px;transform-origin:0 50%;transform:scaleX(0.9563);">金额 人民币（大写）</span>
<span class="t fr" style="top:581.5px;height:16px;line-height:16px;font-size:12.2px;color:#000;left:989px;transform-origin:0 50%;transform:scaleX(1.0397);">AMOUNT  (RMB) :</span>
<div style="left:1116px;top:600px;width:708.5px;height:1px;background:#000;"></div>
<div style="left:1656.75px;top:552px;width:1px;height:48px;background:#000;"></div>
<div style="left:1656.75px;top:552px;width:167.75px;height:1px;background:#000;"></div>
<span class="t fr" style="top:581.0px;height:17px;line-height:17px;font-size:13px;color:#000;font-style:italic;left:1152px;transform-origin:0 50%;transform:scaleX(1.0096);">贰万元整</span>
<span class="t fm" style="top:582.3px;height:15px;line-height:15px;font-size:11.6px;color:#000;left:1214.5px;width:600px;text-align:right;transform-origin:100% 50%;">¥20,000.00</span>
<span class="t fr" style="top:628.5px;height:17px;line-height:17px;font-size:13px;color:#000;left:989px;transform-origin:0 50%;transform:scaleX(1.0096);">用途</span>
<span class="t fr" style="top:628.5px;height:17px;line-height:17px;font-size:13px;color:#000;left:1369.5px;transform-origin:0 50%;">采购单号码</span>
<span class="t fr" style="top:648.0px;height:16px;line-height:16px;font-size:12.2px;color:#000;left:989px;transform-origin:0 50%;transform:scaleX(1.0468);">PARTICULARS :</span>
<div style="left:1116px;top:665px;width:251.75px;height:1px;background:#000;"></div>
<span class="t fr" style="top:648.0px;height:16px;line-height:16px;font-size:12.2px;color:#000;left:1369.5px;transform-origin:0 50%;transform:scaleX(0.9785);">P.R.NO :</span>
<div style="left:1417.75px;top:663px;width:203.0px;height:1px;background:#000;"></div>
<span class="t fr" style="top:673.4px;height:17px;line-height:17px;font-size:13px;color:#000;letter-spacing:0.6px;left:990.25px;transform-origin:0 50%;transform:scaleX(0.9066);">申请人</span>
<span class="t fr" style="top:673.4px;height:17px;line-height:17px;font-size:13px;color:#000;left:1369.5px;transform-origin:0 50%;">核对</span>
<span class="t fr" style="top:691.5px;height:16px;line-height:16px;font-size:12.2px;color:#000;left:989px;transform-origin:0 50%;transform:scaleX(0.9839);">REQUESTED BY :</span>
<div style="left:1088.5px;top:706px;width:195.5px;height:1px;background:#000;"></div>
<span class="t fr" style="top:691.5px;height:16px;line-height:16px;font-size:12.2px;color:#000;left:1369.75px;transform-origin:0 50%;transform:scaleX(0.9572);">VERIFIED BY :</span>
<div style="left:1451.75px;top:706px;width:161.25px;height:1px;background:#000;"></div>
<span class="t fr" style="top:710.3px;height:16px;line-height:16px;font-size:12px;color:#000;left:1646.75px;transform-origin:0 50%;transform:scaleX(0.9896);">部门经理</span>
<span class="t fr" style="top:726.0px;height:16px;line-height:16px;font-size:12.2px;color:#000;left:1605.75px;transform-origin:0 50%;transform:scaleX(1.0308);">( DEPARTMENT HEAD )</span>
<div style="left:987px;top:758px;width:933px;height:2px;background:#000;"></div>
<span class="t fr" style="top:759.8px;height:17px;line-height:17px;font-size:13px;color:#000;font-weight:700;letter-spacing:0.6px;left:1210.88px;width:600px;text-align:center;transform-origin:50% 50%;">财务部填写</span>
<span class="t fr" style="top:777.75px;height:16px;line-height:16px;font-size:12.2px;color:#000;font-weight:700;left:1210.88px;width:600px;text-align:center;transform-origin:50% 50%;transform:scaleX(1.0197);">( FOR ACCOUNTS PAYABLE SECTION USE )</span>
<span class="t fr" style="top:794.8px;height:17px;line-height:17px;font-size:13px;color:#000;left:989px;transform-origin:0 50%;transform:scaleX(0.9135);">日期</span>
<span class="t fr" style="top:794.8px;height:17px;line-height:17px;font-size:13px;color:#000;left:1369.5px;transform-origin:0 50%;transform:scaleX(0.9038);">准备</span>
<span class="t fr" style="top:811.5px;height:16px;line-height:16px;font-size:12.2px;color:#000;left:989px;transform-origin:0 50%;transform:scaleX(1.0281);">DATE:</span>
<div style="left:1028px;top:826px;width:251.75px;height:1px;background:#000;"></div>
<span class="t fr" style="top:811.5px;height:16px;line-height:16px;font-size:12.2px;color:#000;left:1369.5px;transform-origin:0 50%;transform:scaleX(1.0097);">PREPARED BY:</span>
<div style="left:1457.5px;top:826px;width:203.25px;height:1px;background:#000;"></div>
<span class="t fr" style="top:828.5px;height:17px;line-height:17px;font-size:13px;color:#000;left:989px;transform-origin:0 50%;transform:scaleX(0.9038);">支票号码</span>
<span class="t fr" style="top:828.5px;height:17px;line-height:17px;font-size:13px;color:#000;left:1369.5px;transform-origin:0 50%;transform:scaleX(0.9038);">复核</span>
<span class="t fr" style="top:845.5px;height:16px;line-height:16px;font-size:12.2px;color:#000;left:989px;transform-origin:0 50%;transform:scaleX(0.9868);">CHEQUE NO:</span>
<div style="left:1065.25px;top:860px;width:215.75px;height:1px;background:#000;"></div>
<span class="t fr" style="top:845.5px;height:16px;line-height:16px;font-size:12.2px;color:#000;left:1369.5px;transform-origin:0 50%;transform:scaleX(0.9869);">CHECKED BY:</span>
<div style="left:1452.0px;top:860px;width:209.75px;height:1px;background:#000;"></div>
<div style="left:987px;top:877px;width:933px;height:2px;background:#000;"></div>
<span class="t fr" style="top:931.0px;height:16px;line-height:16px;font-size:12.5px;color:#000;font-weight:700;left:989px;transform-origin:0 50%;transform:scaleX(0.9615);">批准</span>
<span class="t fr" style="top:947.75px;height:16px;line-height:16px;font-size:12.2px;color:#000;font-weight:700;left:989px;transform-origin:0 50%;transform:scaleX(0.9545);">APPROVED BY:</span>
<div style="left:1148px;top:946px;width:219.75px;height:1px;background:#000;"></div>
<div style="left:1599.25px;top:946px;width:225.25px;height:1px;background:#000;"></div>
<span class="t fr" style="top:947.2px;height:16px;line-height:16px;font-size:12.5px;color:#000;font-weight:700;left:957.12px;width:600px;text-align:center;transform-origin:50% 50%;transform:scaleX(0.9712);">业主财务</span>
<span class="t fr" style="top:962.75px;height:16px;line-height:16px;font-size:12.2px;color:#000;font-weight:700;left:963.28px;width:600px;text-align:center;transform-origin:50% 50%;transform:scaleX(0.9367);">OWNER FINANCIAL LEADER</span>
<span class="t fr" style="top:947.2px;height:16px;line-height:16px;font-size:12.5px;color:#000;font-weight:700;left:1445.85px;width:600px;text-align:center;transform-origin:50% 50%;transform:scaleX(0.9952);">财务总监</span>
<span class="t fr" style="top:962.75px;height:16px;line-height:16px;font-size:12.2px;color:#000;font-weight:700;left:1430.0px;width:600px;text-align:center;transform-origin:50% 50%;transform:scaleX(0.9799);">DIRECTOR, FINANCE &amp; BUSINESS SUPPORT</span>
<div style="left:960px;top:1027px;width:960px;height:6px;background:#fff;"></div>
<div style="left:961px;top:1027px;width:101px;height:6px;background:#e6e6e6;box-sizing:border-box;border:1px solid #a9a9a9"></div>
<div style="left:1092px;top:1027px;width:830px;height:6px;background:#e6e6e6;box-sizing:border-box;border:1px solid #a9a9a9"></div>
<div style="left:960px;top:46px;width:1px;height:986px;background:#2f8457;"></div>
</div>
</div>
<div style="left:0px;top:1032px;width:1920px;height:48px;background:linear-gradient(90deg,#c2ecd9 0%,#c5edda 38%,#cceee0 46%,#dff0e8 51%,#eaf1ee 55%,#eff2f1 63%,#f1f2f2 100%);"></div>
<div style="left:0px;top:1032px;width:1920px;height:1px;background:rgba(0,0,0,.14);"></div>
<svg style="left:18px;top:1044px;" width="28" height="19" viewBox="0 0 28 19"><defs><linearGradient id="cl" x1="0" y1="0" x2="0" y2="1"><stop offset="0" stop-color="#9db9f3"/><stop offset=".55" stop-color="#c9d8f8"/><stop offset="1" stop-color="#b9cbf5"/></linearGradient></defs><path d="M6.500 17.500a5 5 0 0 1-.6-10A7.400 7.400 0 0 1 20 6.400a5.600 5.600 0 0 1 1 11.100z" fill="url(#cl)" stroke="#8ba8ec" stroke-width=".7"/><path d="M9.500 9.600c1.600-.4 3.300.3 4.300 1.600 1-1.300 2.500-2 4.200-1.800" fill="none" stroke="#a9c0f3" stroke-width=".8"/></svg>
<span class="t fs" style="top:1040.5px;height:15px;line-height:15px;font-size:11.5px;color:#1b1b1b;left:50px;transform-origin:0 50%;transform:scaleX(0.9057);">11°C</span>
<span class="t fs" style="top:1055.5px;height:16px;line-height:16px;font-size:12px;color:#1b1b1b;left:50px;transform-origin:0 50%;">阴</span>
<svg style="left:638.5px;top:1044.5px;" width="24" height="24" viewBox="0 0 24 24"><defs><linearGradient id="wn" x1="0" y1="0" x2="1" y2="1"><stop offset="0" stop-color="#35bdf7"/><stop offset="1" stop-color="#0f76d8"/></linearGradient></defs><g fill="url(#wn)"><rect x="0" y="0" width="11.4" height="11.4" rx="1"/><rect x="12.6" y="0" width="11.4" height="11.4" rx="1"/><rect x="0" y="12.6" width="11.4" height="11.4" rx="1"/><rect x="12.6" y="12.6" width="11.4" height="11.4" rx="1"/></g></svg>
<div style="left:676px;top:1041.5px;width:219px;height:30px;background:rgba(246,251,249,.82);border-radius:15px;box-shadow:0 0 0 1px rgba(0,0,0,.05)"></div>
<svg style="left:686px;top:1048px;" width="16" height="17" viewBox="0 0 16 17"><circle cx="6.6" cy="6.8" r="5.3" fill="none" stroke="#222" stroke-width="1.6"/><path d="M10.4 10.8l4.4 4.6" stroke="#222" stroke-width="1.8" stroke-linecap="round"/></svg>
<span class="t fs" style="top:1047.0px;height:18px;line-height:18px;font-size:14px;color:#555;left:711.5px;transform-origin:0 50%;transform:scaleX(1.0179);">搜索</span>
<svg style="left:842px;top:1043px;" width="48" height="26" viewBox="0 0 48 26"><g><path d="M3 14c1-7 8-11 13-8 3 2 4 6 2 10-4 5-13 5-15-2z" fill="#f3d2a0"/><path d="M1 15c3 4 13 6 19 0 1 2-2 6-9 6s-11-3-10-6z" fill="#e9b978"/><path d="M5 10c3-3 9-4 13 0-3 1-9 2-13 0z" fill="#e76b8c"/><path d="M12 16l6 7-4 1zM9 17l-1 7 3-1z" fill="#e6517b"/><path d="M28 18c0-6 1-11 3-13 3-2 9-2 12 0 2 2 3 7 3 13z" fill="#6a54a6"/><path d="M28 14h18v3H28z" fill="#3e3170"/><ellipse cx="37" cy="19.5" rx="11" ry="3.4" fill="#7e69bd"/><path d="M31 6c2-1 8-1 10 0" stroke="#9c8bd6" stroke-width="1.2" fill="none"/></g></svg>
<svg style="left:906px;top:1044px;" width="26" height="24" viewBox="0 0 26 24"><rect x="9" y="1" width="16" height="14" rx="2" fill="#fdfdfd" stroke="#e2e2e2" stroke-width=".6"/><rect x="1" y="8" width="17" height="15" rx="2" fill="#262626"/><rect x="6" y="8" width="12" height="9" fill="#bdbdbd" opacity=".85"/></svg>
<svg style="left:950px;top:1044px;" width="26" height="23" viewBox="0 0 26 23"><path d="M1 3.5a1.5 1.5 0 0 1 1.5-1.5h7l2.5 2.5H1z" fill="#e6a62e"/><path d="M1 4.5h22.5a1.5 1.5 0 0 1 1.5 1.5v14.5a1.5 1.5 0 0 1-1.5 1.5h-21a1.5 1.5 0 0 1-1.5-1.5z" fill="#fcc846"/><path d="M1 8h24v3H1z" fill="#fdd96d"/><rect x="7" y="15" width="12" height="7" rx="1.2" fill="#1a7fd6"/><rect x="9.5" y="17.3" width="7" height="1.6" rx=".8" fill="#8fd0ff"/></svg>
<div style="left:959.7px;top:1071.5px;width:6px;height:3px;background:#8d9490;border-radius:1.5px"></div>
<svg style="left:995px;top:1043.5px;" width="25" height="25" viewBox="0 0 25 25"><defs><linearGradient id="eg" x1="0" y1="0" x2=".9" y2="1"><stop offset="0" stop-color="#2fb5ee"/><stop offset=".55" stop-color="#1680d8"/><stop offset="1" stop-color="#0b4f9d"/></linearGradient><linearGradient id="eg2" x1="0" y1="0" x2="1" y2=".3"><stop offset="0" stop-color="#2cbfd8"/><stop offset=".6" stop-color="#52d37c"/><stop offset="1" stop-color="#8fe04d"/></linearGradient></defs><circle cx="12.500" cy="12.500" r="12" fill="url(#eg)"/><path d="M1.200 9.500C3 3.800 7.800.500 12.800.500c6.800 0 11.700 4.800 11.700 10 0 3.200-2.600 5.300-6 5.300-2.300 0-4-1-4-2.300 0-.9 1.100-1.300 1.100-2.700 0-2.300-2.400-4.300-5.600-4.300-4 0-7 2-8.800 3z" fill="url(#eg2)"/><path d="M9.300 12.600c0 4.600 3.600 8.500 8.800 8.500 1.700 0 3.400-.5 4.600-1.300-1.900 3.100-5.600 5-9.300 4.700C7.300 24 3 19.300 4 14.500c.6-3 3.300-5.400 6.400-5.700-.7 1-1.100 2.300-1.100 3.800z" fill="#0c4a97" opacity=".9"/><path d="M14.600 13.700c.2 1.300 1.800 2.100 3.900 2.100 2.500 0 4.600-1.100 5.500-3-1.200 3.600-4.700 5.800-8.200 5-2.200-.6-3.300-2.600-1.200-4.100z" fill="#eaf5fb"/></svg>
<div style="left:1004.0px;top:1071.5px;width:6px;height:3px;background:#8d9490;border-radius:1.5px"></div>
<svg style="left:1038.5px;top:1044px;" width="25" height="24" viewBox="0 0 25 24"><path d="M7.500 6V4a5 5 0 0 1 10 0v2" fill="none" stroke="#2ba3ee" stroke-width="2"/><rect x="0.500" y="5.500" width="24" height="18" rx="2.500" fill="#11509a"/><rect x="7" y="9.500" width="5" height="5" fill="#f25022"/><rect x="13" y="9.500" width="5" height="5" fill="#7fba00"/><rect x="7" y="15.500" width="5" height="5" fill="#00a4ef"/><rect x="13" y="15.500" width="5" height="5" fill="#ffb900"/></svg>
<svg style="left:1086px;top:1043.5px;" width="19" height="24" viewBox="0 0 19 24"><rect x="0.500" y="0.500" width="18" height="23" rx="1.500" fill="#7d8794"/><rect x="2.500" y="2.500" width="14" height="5" fill="#5bd0f4"/><rect x="2.5" y="9.5" width="2.800" height="2.700" fill="#d6dce4"/><rect x="2.5" y="13.1" width="2.800" height="2.700" fill="#d6dce4"/><rect x="2.5" y="16.7" width="2.800" height="2.700" fill="#d6dce4"/><rect x="2.5" y="20.3" width="2.800" height="2.700" fill="#d6dce4"/><rect x="6.2" y="9.5" width="2.800" height="2.700" fill="#d6dce4"/><rect x="6.2" y="13.1" width="2.800" height="2.700" fill="#d6dce4"/><rect x="6.2" y="16.7" width="2.800" height="2.700" fill="#d6dce4"/><rect x="6.2" y="20.3" width="2.800" height="2.700" fill="#d6dce4"/><rect x="9.9" y="9.5" width="2.800" height="2.700" fill="#d6dce4"/><rect x="9.9" y="13.1" width="2.800" height="2.700" fill="#d6dce4"/><rect x="9.9" y="16.7" width="2.800" height="2.700" fill="#d6dce4"/><rect x="9.9" y="20.3" width="2.800" height="2.700" fill="#d6dce4"/><rect x="13.600000000000001" y="9.5" width="2.800" height="2.700" fill="#d6dce4"/><rect x="13.600000000000001" y="13.1" width="2.800" height="2.700" fill="#d6dce4"/><rect x="13.600000000000001" y="16.7" width="2.800" height="2.700" fill="#1b4f8f"/><rect x="13.600000000000001" y="20.3" width="2.800" height="2.700" fill="#1b4f8f"/></svg>
<div style="left:1092.0px;top:1071.5px;width:6px;height:3px;background:#8d9490;border-radius:1.5px"></div>
<div style="left:1119px;top:1036px;width:40px;height:39.5px;background:#ecb1ac;border-radius:4px"></div>
<div style="left:1123px;top:1072px;width:31.5px;height:3px;background:#d22d1f;border-radius:1.5px"></div>
<svg style="left:1125px;top:1044px;" width="29" height="24" viewBox="0 0 29 24"><ellipse cx="10" cy="9" rx="9" ry="7.800" fill="#2dc84d"/><path d="M5 15l-1.500 4 4.500-2.500z" fill="#2dc84d"/><circle cx="6.800" cy="6.800" r="1.100" fill="#0d7a27"/><circle cx="13" cy="6.800" r="1.100" fill="#0d7a27"/><ellipse cx="20" cy="15" rx="7.500" ry="6.500" fill="#ebebeb"/><path d="M23.500 20l1.500 3-4-1.800z" fill="#ebebeb"/><circle cx="17.500" cy="13.300" r=".9" fill="#8a8a8a"/><circle cx="22.300" cy="13.300" r=".9" fill="#8a8a8a"/></svg>
<svg style="left:1170.5px;top:1043.5px;" width="25" height="25" viewBox="0 0 25 25"><circle cx="12.500" cy="12.500" r="12" fill="#fff"/><path d="M12.500 12.500L2.100 6.500A12 12 0 0 1 22.900 6.500z" fill="#ea4335"/><path d="M12.500 12.500L22.900 6.500A12 12 0 0 1 12.500 24.500z" fill="#fbbc04"/><path d="M12.500 12.500L12.500 24.500A12 12 0 0 1 2.100 6.500z" fill="#34a853"/><circle cx="12.500" cy="12.500" r="5.600" fill="#fff"/><circle cx="12.500" cy="12.500" r="4.400" fill="#4285f4"/></svg>
<div style="left:1180.0px;top:1071.5px;width:6px;height:3px;background:#8d9490;border-radius:1.5px"></div>
<svg style="left:1215px;top:1044px;" width="24" height="24" viewBox="0 0 24 24"><rect width="24" height="24" rx="3" fill="#2556e8"/><path d="M7 5l5 7 5-7M12 12v8M7.500 12.500h9M7.500 16h9" fill="none" stroke="#fff" stroke-width="2"/></svg>
<div style="left:1223.8px;top:1071.5px;width:6px;height:3px;background:#8d9490;border-radius:1.5px"></div>
<div style="left:1254px;top:1037.5px;width:35px;height:37.5px;background:rgba(255,255,255,.55);border-radius:4px"></div>
<div style="left:1251px;top:1037.5px;width:35px;height:37.5px;background:rgba(255,255,255,.8);border-radius:4px;box-shadow:0 0 0 .5px rgba(0,0,0,.06)"></div>
<svg style="left:1259px;top:1044px;" width="24" height="23" viewBox="0 0 24 23"><rect x="9" y="1.500" width="14.500" height="20" rx="1" fill="#fff" stroke="#1e7044" stroke-width="1"/><path d="M14 1.500v20M18.500 1.500v20M9 6h14.500M9 10h14.500M9 14h14.500M9 18h14.500" stroke="#1e7044" stroke-width="1"/><path d="M0 2.600L14 0v23L0 20.400z" fill="#1e7044"/><path d="M4 6.800l6 9.400M10 6.800l-6 9.400" stroke="#fff" stroke-width="2"/></svg>
<div style="left:1263px;top:1072px;width:16px;height:3px;background:#1a73d9;border-radius:1.5px"></div>
<svg style="left:1645.5px;top:1052px;" width="12" height="8" viewBox="0 0 12 8"><path d="M1 6.800L6 1.800l5 5" fill="none" stroke="#222" stroke-width="1.400"/></svg>
<svg style="left:1674px;top:1047.5px;" width="18" height="18" viewBox="0 0 18 18"><g fill="none" stroke="#222" stroke-width="1.300"><path d="M2.200 9.500A6.800 6.800 0 0 1 14.500 4.500M15 1v4h-4"/><path d="M14.800 8.500A6.800 6.800 0 0 1 2.800 13.400M2.300 16.800v-4h4"/></g><circle cx="13" cy="12.800" r="4.200" fill="#0f6cdb"/></svg>
<span class="t fs" style="top:1046.6px;height:18px;line-height:18px;font-size:14px;color:#1b1b1b;left:1707.7px;transform-origin:0 50%;transform:scaleX(0.9643);">中</span>
<span class="t fs" style="top:1046.6px;height:18px;line-height:18px;font-size:14px;color:#1b1b1b;left:1745.6px;transform-origin:0 50%;transform:scaleX(1.0286);">拼</span>
<svg style="left:1782.5px;top:1047.5px;" width="18" height="18" viewBox="0 0 18 18"><g fill="none" stroke="#222" stroke-width="1.200"><rect x="0.600" y="1" width="11" height="11.500" rx="1"/><path d="M4 16h7M7.500 12.500V16"/><rect x="12.500" y="1" width="3.400" height="5" rx=".8" fill="#f1f2f2"/><path d="M14.200 6v10H11"/></g></svg>
<svg style="left:1806.5px;top:1048px;" width="18" height="16" viewBox="0 0 18 16"><g fill="none" stroke="#222" stroke-width="1.200"><path d="M1 5.500h2.800L7.500 2v12L3.800 10.500H1z"/><path d="M10 5.500a3.600 3.600 0 0 1 0 5M12.300 3.300a6.600 6.600 0 0 1 0 9.400M14.600 1.200a9.600 9.600 0 0 1 0 13.600"/></g></svg>
<span class="t fs" style="top:1040.0px;height:16px;line-height:16px;font-size:12px;color:#1b1b1b;left:1300.3px;width:600px;text-align:right;transform-origin:100% 50%;transform:scaleX(0.8924);">12:41</span>
<span class="t fs" style="top:1056.0px;height:16px;line-height:16px;font-size:12px;color:#1b1b1b;left:1300.3px;width:600px;text-align:right;transform-origin:100% 50%;">2025/12/16</span>
</div></body></html>
